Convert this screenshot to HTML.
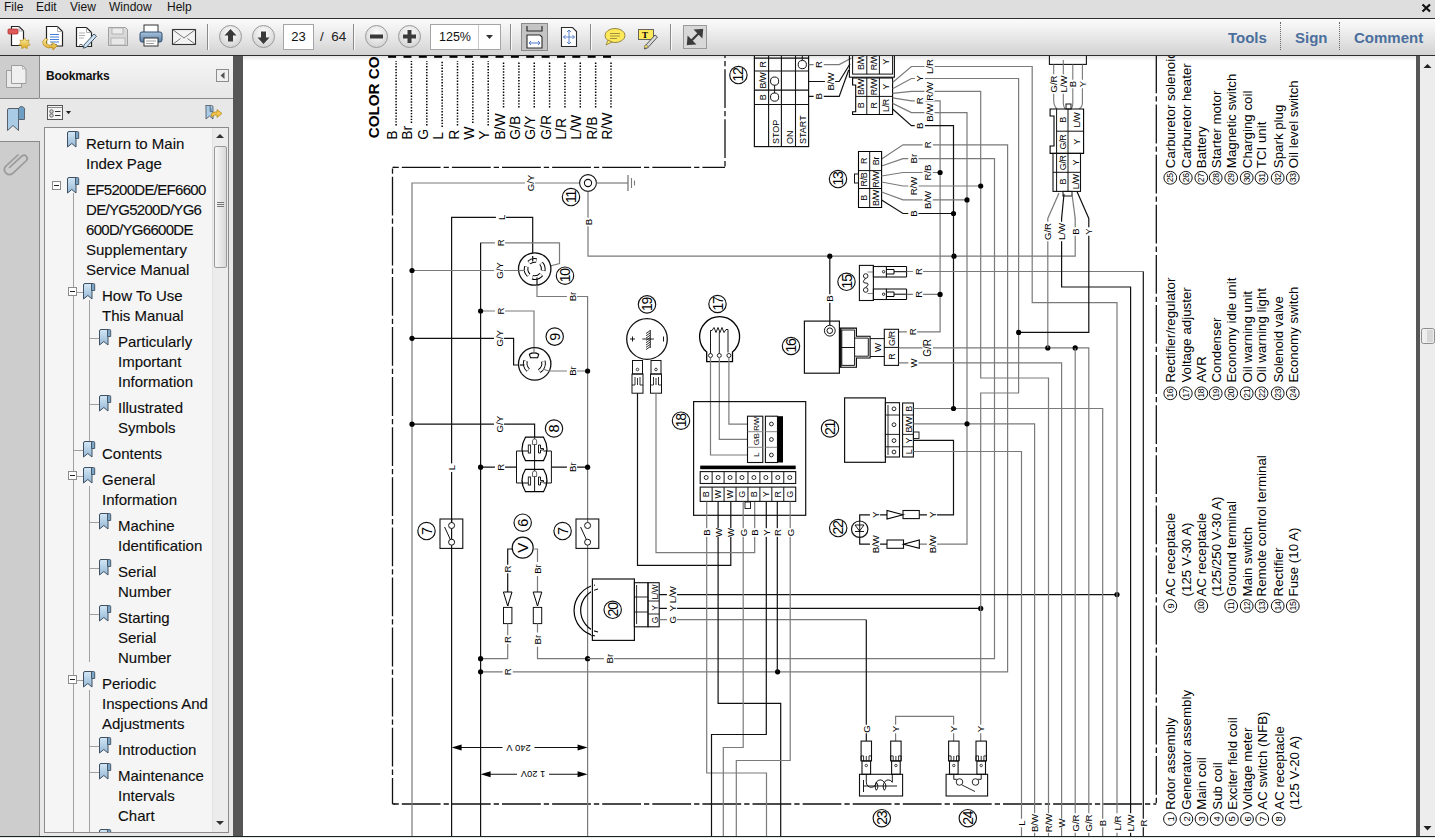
<!DOCTYPE html>
<html><head><meta charset="utf-8"><style>
*{margin:0;padding:0;box-sizing:border-box}
html,body{width:1435px;height:838px;overflow:hidden;background:#fff;font-family:"Liberation Sans",sans-serif}
.a{position:absolute}
#menu{left:0;top:0;width:1435px;height:18px;background:#dedede}
#menu span{position:absolute;top:0px;font-size:12px;color:#141414}
#mline{left:0;top:18px;width:1435px;height:1px;background:#2e2e2e}
#tb{left:0;top:19px;width:1435px;height:36px;background:linear-gradient(#fbfbfb,#eaeaea 45%,#d2d2d2)}
#tline{left:0;top:55px;width:1435px;height:1px;background:#2e2e2e}
.sep{position:absolute;top:24px;width:2px;height:26px;background:#8a8a8a;border-right:1px solid #fafafa}
.rb{position:absolute;top:29px;font-size:15px;font-weight:bold;color:#4b6f9c}
.dsep{position:absolute;top:22px;width:1px;height:28px;border-left:1px dotted #6a6a6a}
#lcol{left:0;top:56px;width:40px;height:780px;background:#cdcdcd;border-right:1px solid #8a8a8a}
#panel{left:40px;top:56px;width:193px;height:780px;background:#e8e8e8}
#divider{left:233px;top:56px;width:10px;height:780px;background:#565656}
#doc{left:243px;top:56px;width:1173px;height:780px;background:#fff}
#rdiv{left:1416px;top:56px;width:4px;height:780px;background:#565656}
#vscroll{left:1420px;top:56px;width:15px;height:780px;background:#ededed}
#bottom{left:0;top:836px;width:1435px;height:2px;background:#e2e8e7;border-top:1px solid #1e2422}
#tree{left:44px;top:127px;width:185px;height:706px;background:#f5f5f5;border:1px solid #8a8a8a;overflow:hidden}
.tx{position:absolute;font-size:15px;color:#0d0d0d;line-height:20px;white-space:nowrap;-webkit-text-stroke:0.12px #0d0d0d}
</style></head><body>
<div id="menu" class="a">
<span style="left:4px">File</span><span style="left:36px">Edit</span><span style="left:70px">View</span><span style="left:109px">Window</span><span style="left:167px">Help</span>
</div>
<svg class="a" style="left:1421px;top:3px" width="11" height="10"><path d="M1.5,1.5 L9,8.5 M9,1.5 L1.5,8.5" stroke="#111" stroke-width="2.2"/></svg>
<div id="mline" class="a"></div>
<div id="tb" class="a"></div>
<div id="tline" class="a"></div>
<div class="sep" style="left:207px"></div>
<div class="sep" style="left:353px"></div>
<div class="sep" style="left:510px"></div>
<div class="sep" style="left:590px"></div>
<div class="sep" style="left:670px"></div>
<div class="a" style="left:283px;top:24px;width:31px;height:26px;background:#fff;border:1px solid #a5a5a5;font-size:13px;text-align:center;line-height:24px;color:#111">23</div>
<div class="a" style="left:320px;top:29px;font-size:13.5px;color:#222">/&nbsp;&nbsp;64</div>
<div class="a" style="left:430px;top:24px;width:71px;height:26px;background:#fff;border:1px solid #a5a5a5;font-size:12.5px;line-height:24px;padding-left:8px;color:#111">125%</div>
<div class="a" style="left:478px;top:25px;width:1px;height:24px;background:#c8c8c8"></div>
<svg class="a" style="left:0;top:19px" width="720" height="36" viewBox="0 19 720 36">
<defs>
<linearGradient id="gold" x1="0" x2="0" y1="0" y2="1"><stop offset="0" stop-color="#fff2a0"/><stop offset="1" stop-color="#d9a520"/></linearGradient>
<radialGradient id="circ" cx="0.5" cy="0.35" r="0.7"><stop offset="0" stop-color="#ffffff"/><stop offset="1" stop-color="#cfcfcf"/></radialGradient>
<linearGradient id="pr" x1="0" x2="0" y1="0" y2="1"><stop offset="0" stop-color="#a9c3dc"/><stop offset="1" stop-color="#5a7ea3"/></linearGradient>
</defs>
<path d="M11.5,26.5 h7.5 l4.5,4.5 v14.5 h-12 z" fill="#fff" stroke="#222" stroke-width="1.2"/>
<path d="M19,26.5 v4.5 h4.5" fill="none" stroke="#999" stroke-width="0.8"/>
<rect x="8" y="29" width="10" height="5" rx="1" fill="#e05a5a" stroke="#a33" stroke-width="0.8"/>
<path d="M24.5,38 l1.6,2.6 3,-0.6 -1,2.9 2.2,2 -2.9,0.8 -0.2,3 -2.7,-1.5 -2.7,1.5 -0.2,-3 -2.9,-0.8 2.2,-2 -1,-2.9 3,0.6 z" fill="url(#gold)" stroke="#b88a1a" stroke-width="0.6"/>
<path d="M46.5,26.5 h11 l5,5 v14.5 h-16 z" fill="#fff" stroke="#222" stroke-width="1.2"/>
<path d="M57.5,26.5 v5 h5" fill="none" stroke="#999" stroke-width="0.8"/>
<path d="M50,34.5 h9 M50,37 h9 M50,39.5 h9 M50,42 h9 M51,44.5 h6" stroke="#2a6fd6" stroke-width="0.9"/>
<path d="M45.5,38.5 q-5,3 -1,7.5 q3,3 8,1.5 l0.5,2.5 l4.5,-4.5 l-5.5,-3 l0.3,2.3 q-3.5,1 -5.5,-1 q-1.8,-2 1.2,-4.5 z" fill="url(#gold)" stroke="#b0821a" stroke-width="0.7"/>
<path d="M76.5,27.5 h10 l5,5 v14 h-15 z" fill="#fff" stroke="#222" stroke-width="1.2"/>
<path d="M86.5,27.5 v5 h5" fill="none" stroke="#999" stroke-width="0.8"/>
<path d="M79,33 h6 M79,35.5 h6 M79,38 h5" stroke="#999" stroke-width="0.8"/>
<path d="M84,45 l10,-11 l2.5,2.2 l-10,11 l-3.2,1 z" fill="#cfe3f5" stroke="#34495e" stroke-width="0.9"/>
<path d="M79,45.5 q2,-2.5 4,0" fill="none" stroke="#333" stroke-width="0.8"/>
<path d="M108.5,27.5 h17 l2,2 v16 h-19 z" fill="#d9d9d9" stroke="#a0a0a0" stroke-width="1"/>
<rect x="112" y="28" width="11" height="6" fill="#ececec" stroke="#aaa" stroke-width="0.8"/>
<rect x="111" y="38" width="14" height="7" fill="#e8e8e8" stroke="#aaa" stroke-width="0.8"/>
<rect x="144" y="25" width="14" height="8" fill="#fff" stroke="#333" stroke-width="1"/>
<rect x="140" y="32" width="22" height="10" rx="2" fill="url(#pr)" stroke="#2f4f6f" stroke-width="1"/>
<rect x="144" y="38" width="14" height="8" fill="#fff" stroke="#333" stroke-width="1"/>
<path d="M146,41 h10 M146,43.5 h8" stroke="#777" stroke-width="0.7"/>
<rect x="172.5" y="29.5" width="23" height="15" fill="#f4f4f4" stroke="#333" stroke-width="1.1"/>
<path d="M172.5,29.5 l11.5,8.5 l11.5,-8.5 M172.5,44.5 l8,-6 M195.5,44.5 l-8,-6" fill="none" stroke="#666" stroke-width="0.9"/>
<circle cx="230.5" cy="36.5" r="11" fill="url(#circ)" stroke="#9a9a9a" stroke-width="1"/>
<path d="M230.5,29 l-6,6.5 h3.5 v6 h5 v-6 h3.5 z" fill="#3a3a3a"/>
<circle cx="263.5" cy="36.5" r="11" fill="url(#circ)" stroke="#9a9a9a" stroke-width="1"/>
<path d="M263.5,44 l-6,-6.5 h3.5 v-6 h5 v6 h3.5 z" fill="#3a3a3a"/>
<circle cx="376.5" cy="36.5" r="11" fill="url(#circ)" stroke="#9a9a9a" stroke-width="1"/>
<rect x="370" y="34.5" width="13" height="4" fill="#3a3a3a"/>
<circle cx="409.5" cy="36.5" r="11" fill="url(#circ)" stroke="#9a9a9a" stroke-width="1"/>
<path d="M407.5,30 h4 v4.5 h4.5 v4 h-4.5 v4.5 h-4 v-4.5 h-4.5 v-4 h4.5 z" fill="#3a3a3a"/>
<path d="M486,35 h7 l-3.5,4 z" fill="#333"/>
<rect x="521.5" y="23.5" width="26" height="27" fill="#c4c4c4" stroke="#8a8a8a" stroke-width="1"/>
<path d="M527,26 v5 h15 v-5" fill="none" stroke="#2a2a2a" stroke-width="1.2"/>
<path d="M527,48 v-13 h13 l2,2 v11 z" fill="#fff" stroke="#2a2a2a" stroke-width="1.1"/>
<path d="M529,43 h11 M529,43 l2,-2 M529,43 l2,2 M540,43 l-2,-2 M540,43 l-2,2" stroke="#4a78c8" stroke-width="1"/>
<path d="M561.5,27.5 h11 l4,4 v15 h-15 z" fill="#fff" stroke="#2a2a2a" stroke-width="1.1"/>
<path d="M569,30 v14 M563.5,37 h11 M569,30 l-2,2 M569,30 l2,2 M569,44 l-2,-2 M569,44 l2,-2 M563.5,37 l2,-2 M563.5,37 l2,2 M574.5,37 l-2,-2 M574.5,37 l-2,2" stroke="#4a78c8" stroke-width="0.9"/>
<ellipse cx="615" cy="35.5" rx="10" ry="7" fill="#fde95a" stroke="#8a7a3a" stroke-width="0.9"/>
<path d="M608,40 l-2,5 l6,-3 z" fill="#fde95a" stroke="#8a7a3a" stroke-width="0.8"/>
<path d="M610,33.5 h10 M610,36 h10 M610,38.5 h7" stroke="#8a7a3a" stroke-width="0.8"/>
<rect x="638.5" y="29.5" width="15" height="10" fill="#fde95a" stroke="#555" stroke-width="0.9"/>
<text x="642" y="38" font-size="9" font-weight="bold" font-family="Liberation Serif">T</text>
<path d="M645,46 l10,-11 l2.5,2 l-10,11 l-3,1 z" fill="#d8d8d8" stroke="#444" stroke-width="0.9"/>
<circle cx="646" cy="46.5" r="1.6" fill="#f3d95a" stroke="#776" stroke-width="0.6"/>
<rect x="683.5" y="25.5" width="23" height="23" fill="#d8d8d8" stroke="#9a9a9a" stroke-width="1"/>
<path d="M688,44 l14,-14 M702,30 l-6,0.5 l5.5,5.5 z M688,44 l6,-0.5 l-5.5,-5.5 z" stroke="#3a3a3a" stroke-width="2.2" fill="#3a3a3a"/>
</svg>
<div class="rb" style="left:1228px">Tools</div>
<div class="dsep" style="left:1280px"></div>
<div class="rb" style="left:1295px">Sign</div>
<div class="dsep" style="left:1339px"></div>
<div class="rb" style="left:1354px">Comment</div>

<div id="lcol" class="a"></div>

<svg class="a" style="left:0;top:56px" width="40" height="130" viewBox="0 56 40 130">
<rect x="0" y="98" width="40" height="43" fill="#e8e8e8"/>
<line x1="0" y1="98.5" x2="39.5" y2="98.5" stroke="#8a8a8a" stroke-width="1"/>
<line x1="0" y1="141.5" x2="39.5" y2="141.5" stroke="#8a8a8a" stroke-width="1"/>
<path d="M6.5,70.5 h15 v17 h-15 z" fill="#e9e9e9" stroke="#9d9d9d" stroke-width="1"/>
<path d="M11.5,65.5 h11 l3.5,3.5 v14.5 h-14.5 z" fill="#f0f0f0" stroke="#9d9d9d" stroke-width="1"/>
<path d="M22.5,65.5 v3.5 h3.5" fill="none" stroke="#aaa" stroke-width="0.8"/>
<path d="M7.5,110 a1.5,1.5 0 0 1 1.5,-1.5 h10 a3,3 0 0 1 3,3 v8 h-3.5 v11 l-5.5,-5 l-5.5,5 z" fill="#a9cbe6" stroke="#555f6a" stroke-width="1"/>
<path d="M18.5,108.5 a3,3 0 0 1 6,2.5 v8.5 h-6 z" fill="#6f9fc4" stroke="#555f6a" stroke-width="0.9"/>
<path d="M9,168 l13,-12 a3.2,3.2 0 0 1 4.5,4.5 l-14,13 a5,5 0 0 1 -7,-7 l13,-12" fill="none" stroke="#9a9a9a" stroke-width="1.7"/>
</svg>

<div id="panel" class="a"></div>

<div class="a" style="left:40px;top:56px;width:193px;height:42px;background:linear-gradient(#f6f6f6,#e6e6e6)"></div>
<div class="a" style="left:40px;top:98px;width:193px;height:1px;background:#8a8a8a"></div>
<div class="a" style="left:46px;top:69px;font-size:12px;font-weight:bold;color:#111;letter-spacing:-0.2px">Bookmarks</div>
<div class="a" style="left:216px;top:69px;width:13px;height:13px;border:1px solid #8c8c8c;background:#efefef"></div>
<svg class="a" style="left:216px;top:69px" width="13" height="13"><path d="M4.5,6.5 l4,-3.5 v7 z" fill="#555"/></svg>
<svg class="a" style="left:47px;top:105px" width="30" height="16">
<rect x="0.5" y="0.5" width="15" height="14" fill="#f4f4f4" stroke="#555" stroke-width="1"/>
<line x1="0.5" y1="2.5" x2="15.5" y2="2.5" stroke="#888" stroke-width="1"/>
<circle cx="4.5" cy="6.5" r="1.8" fill="#ccc" stroke="#555" stroke-width="0.8"/><circle cx="4.5" cy="10.5" r="1.8" fill="#ccc" stroke="#555" stroke-width="0.8"/>
<path d="M8,6.5 h5.5 M8,10.5 h5.5" stroke="#333" stroke-width="1"/>
<path d="M19,6 h5 l-2.5,3.2 z" fill="#222"/>
</svg>
<svg class="a" style="left:204px;top:104px" width="20" height="18">
<path d="M1.5,1.5 h6 a1.5,1.5 0 0 1 1.5,1.5 v12 l-3.5,-3 l-3.5,3 v-12 a1.5,1.5 0 0 1 0,-1.5" fill="#a9cbe6" stroke="#555f6a" stroke-width="0.9"/>
<path d="M6,1.5 v6 h3" fill="#6f9fc4" stroke="#555f6a" stroke-width="0.7"/>
<path d="M7,12 a4,4 0 0 1 4,-4 h2 v-2.5 l5,4 l-5,4 v-2.5 h-2 a2,2 0 0 0 -2,2 z" fill="#f3c44a" stroke="#b0821a" stroke-width="0.7"/>
</svg>

<div id="divider" class="a"></div>
<div id="doc" class="a"></div>
<svg class="a" style="left:243px;top:56px" width="1173" height="780" viewBox="243 56 1173 780" font-family="Liberation Sans, sans-serif"><polyline points="392.5,168.4 392.5,804" fill="none" stroke="#111" stroke-width="1.3" stroke-dasharray="5.3 3 38.8 3"/>
<polyline points="393.5,167.4 725,167.4" fill="none" stroke="#111" stroke-width="1.3" stroke-dasharray="5.3 3 38.8 3"/>
<polyline points="725,166.4 725,50" fill="none" stroke="#111" stroke-width="1.3" stroke-dasharray="5.3 3 38.8 3"/>
<polyline points="393.5,804 1156.3,804" fill="none" stroke="#111" stroke-width="1.3" stroke-dasharray="5.3 3 38.8 3"/>
<polyline points="1156.3,803 1156.3,50" fill="none" stroke="#111" stroke-width="1.3" stroke-dasharray="5.3 3 38.8 3"/>
<polyline points="392.5,167.4 395,167.4" fill="none" stroke="#111" stroke-width="1.3" />
<polyline points="392.5,804 395,804" fill="none" stroke="#111" stroke-width="1.3" />
<text transform="translate(378.8,138.3) rotate(-90)" font-size="15.2" font-weight="bold">COLOR CODE</text>
<text transform="translate(397.1,139.8) rotate(-90)" font-size="14">B</text>
<line x1="396.1" y1="125.5" x2="396.1" y2="61" stroke="#000" stroke-width="1.5" stroke-dasharray="1.4 1.5"/>
<rect x="388.1" y="56" width="8" height="1.8" fill="#000"/>
<text transform="translate(412.45000000000005,139.8) rotate(-90)" font-size="14">Br</text>
<line x1="411.45000000000005" y1="123" x2="411.45000000000005" y2="61" stroke="#000" stroke-width="1.5" stroke-dasharray="1.4 1.5"/>
<rect x="403.45000000000005" y="56" width="8" height="1.8" fill="#000"/>
<text transform="translate(427.8,139.8) rotate(-90)" font-size="14">G</text>
<line x1="426.8" y1="125.5" x2="426.8" y2="61" stroke="#000" stroke-width="1.5" stroke-dasharray="1.4 1.5"/>
<rect x="418.8" y="56" width="8" height="1.8" fill="#000"/>
<text transform="translate(443.15000000000003,139.8) rotate(-90)" font-size="14">L</text>
<line x1="442.15000000000003" y1="127" x2="442.15000000000003" y2="61" stroke="#000" stroke-width="1.5" stroke-dasharray="1.4 1.5"/>
<rect x="434.15000000000003" y="56" width="8" height="1.8" fill="#000"/>
<text transform="translate(458.5,139.8) rotate(-90)" font-size="14">R</text>
<line x1="457.5" y1="125.5" x2="457.5" y2="61" stroke="#000" stroke-width="1.5" stroke-dasharray="1.4 1.5"/>
<rect x="449.5" y="56" width="8" height="1.8" fill="#000"/>
<text transform="translate(473.85,139.8) rotate(-90)" font-size="14">W</text>
<line x1="472.85" y1="123" x2="472.85" y2="61" stroke="#000" stroke-width="1.5" stroke-dasharray="1.4 1.5"/>
<rect x="464.85" y="56" width="8" height="1.8" fill="#000"/>
<text transform="translate(489.20000000000005,139.8) rotate(-90)" font-size="14">Y</text>
<line x1="488.20000000000005" y1="125.5" x2="488.20000000000005" y2="61" stroke="#000" stroke-width="1.5" stroke-dasharray="1.4 1.5"/>
<rect x="480.20000000000005" y="56" width="8" height="1.8" fill="#000"/>
<text transform="translate(504.55,139.8) rotate(-90)" font-size="14">B/W</text>
<line x1="503.55" y1="107.5" x2="503.55" y2="61" stroke="#000" stroke-width="1.5" stroke-dasharray="1.4 1.5"/>
<rect x="495.55" y="56" width="8" height="1.8" fill="#000"/>
<text transform="translate(519.9,139.8) rotate(-90)" font-size="14">G/B</text>
<line x1="518.9" y1="107.5" x2="518.9" y2="61" stroke="#000" stroke-width="1.5" stroke-dasharray="1.4 1.5"/>
<rect x="510.9" y="56" width="8" height="1.8" fill="#000"/>
<text transform="translate(535.25,139.8) rotate(-90)" font-size="14">G/Y</text>
<line x1="534.25" y1="107.5" x2="534.25" y2="61" stroke="#000" stroke-width="1.5" stroke-dasharray="1.4 1.5"/>
<rect x="526.25" y="56" width="8" height="1.8" fill="#000"/>
<text transform="translate(550.6,139.8) rotate(-90)" font-size="14">G/R</text>
<line x1="549.6" y1="107.5" x2="549.6" y2="61" stroke="#000" stroke-width="1.5" stroke-dasharray="1.4 1.5"/>
<rect x="541.6" y="56" width="8" height="1.8" fill="#000"/>
<text transform="translate(565.95,139.8) rotate(-90)" font-size="14">L/R</text>
<line x1="564.95" y1="107.5" x2="564.95" y2="61" stroke="#000" stroke-width="1.5" stroke-dasharray="1.4 1.5"/>
<rect x="556.95" y="56" width="8" height="1.8" fill="#000"/>
<text transform="translate(581.3,139.8) rotate(-90)" font-size="14">L/W</text>
<line x1="580.3" y1="107.5" x2="580.3" y2="61" stroke="#000" stroke-width="1.5" stroke-dasharray="1.4 1.5"/>
<rect x="572.3" y="56" width="8" height="1.8" fill="#000"/>
<text transform="translate(596.65,139.8) rotate(-90)" font-size="14">R/B</text>
<line x1="595.65" y1="107.5" x2="595.65" y2="61" stroke="#000" stroke-width="1.5" stroke-dasharray="1.4 1.5"/>
<rect x="587.65" y="56" width="8" height="1.8" fill="#000"/>
<text transform="translate(612.0,139.8) rotate(-90)" font-size="14">R/W</text>
<line x1="611.0" y1="107.5" x2="611.0" y2="61" stroke="#000" stroke-width="1.5" stroke-dasharray="1.4 1.5"/>
<rect x="603.0" y="56" width="8" height="1.8" fill="#000"/>
<polyline points="412,836 412,183 579.5,183" fill="none" stroke="#7a7a7a" stroke-width="1.2" />
<rect x="524.92" y="173.148" width="10.16" height="19.703999999999997" fill="#fff"/>
<text transform="translate(530,183) rotate(-90)" text-anchor="middle" dominant-baseline="central" font-size="9.6" fill="#000" font-weight="normal">G/Y</text>
<circle cx="588" cy="183" r="8.4" fill="#fff" stroke="#111" stroke-width="1.1"/>
<circle cx="588" cy="183" r="3.6" fill="#fff" stroke="#111" stroke-width="1.1"/>
<polyline points="596.4,183 628,183" fill="none" stroke="#7a7a7a" stroke-width="1.2" />
<line x1="628" y1="175" x2="628" y2="191" stroke="#7a7a7a" stroke-width="1.3"/>
<line x1="631.5" y1="178" x2="631.5" y2="188" stroke="#7a7a7a" stroke-width="1.1"/>
<line x1="634.5" y1="180.5" x2="634.5" y2="185.5" stroke="#7a7a7a" stroke-width="1.1"/>
<circle cx="571" cy="197" r="8.7" fill="#fff" stroke="#111" stroke-width="1.15"/>
<text transform="translate(571,197) rotate(-90)" text-anchor="middle" dominant-baseline="central" font-size="14" letter-spacing="-1.2">11</text>
<polyline points="588,191.4 588,256.2 1075.2,256.2 1075.2,218" fill="none" stroke="#7a7a7a" stroke-width="1.2" />
<rect x="582.92" y="217.716" width="10.16" height="8.568" fill="#fff"/>
<text transform="translate(588,222) rotate(-90)" text-anchor="middle" dominant-baseline="central" font-size="9.6" fill="#000" font-weight="normal">B</text>
<circle cx="829.8" cy="256.2" r="2.6" fill="#000"/>
<circle cx="954" cy="256.2" r="2.6" fill="#000"/>
<polyline points="451.6,836 451.6,217.3 532.7,217.3 532.7,256" fill="none" stroke="#111" stroke-width="1.2" />
<rect x="495.92" y="213.01600000000002" width="10.16" height="8.568" fill="#fff"/>
<text transform="translate(501,217.3) rotate(-90)" text-anchor="middle" dominant-baseline="central" font-size="9.6" fill="#000" font-weight="normal">L</text>
<rect x="446.52000000000004" y="463.416" width="10.16" height="8.568" fill="#fff"/>
<text transform="translate(451.6,467.7) rotate(-90)" text-anchor="middle" dominant-baseline="central" font-size="9.6" fill="#000" font-weight="normal">L</text>
<polyline points="480.6,242.8 559.5,242.8 559.5,263.5 542.5,268" fill="none" stroke="#7a7a7a" stroke-width="1.2" />
<polyline points="480.6,836 480.6,242.8" fill="none" stroke="#111" stroke-width="1.2" />
<rect x="494.92" y="238.51600000000002" width="10.16" height="8.568" fill="#fff"/>
<text transform="translate(500,242.8) rotate(-90)" text-anchor="middle" dominant-baseline="central" font-size="9.6" fill="#000" font-weight="normal">R</text>
<circle cx="534.7" cy="269" r="16.2" fill="#fff" stroke="#111" stroke-width="1.3"/>
<path d="M528.95,262.61 A8.6,8.6 0 0 1 536.49,260.59" fill="none" stroke="#000" stroke-width="4.6"/>
<path d="M529.09,262.48 A8.6,8.6 0 0 1 536.30,260.55" fill="none" stroke="#fff" stroke-width="2.6"/>
<path d="M541.09,263.25 A8.6,8.6 0 0 1 543.11,270.79" fill="none" stroke="#000" stroke-width="4.6"/>
<path d="M541.22,263.39 A8.6,8.6 0 0 1 543.15,270.60" fill="none" stroke="#fff" stroke-width="2.6"/>
<path d="M541.29,274.53 A8.6,8.6 0 0 1 532.33,277.27" fill="none" stroke="#000" stroke-width="4.6"/>
<path d="M541.17,274.67 A8.6,8.6 0 0 1 532.51,277.32" fill="none" stroke="#fff" stroke-width="2.6"/>
<path d="M528.73,275.19 A8.6,8.6 0 0 1 526.43,266.63" fill="none" stroke="#000" stroke-width="4.6"/>
<path d="M528.59,275.05 A8.6,8.6 0 0 1 526.38,266.81" fill="none" stroke="#fff" stroke-width="2.6"/>
<line x1="532.7" y1="256" x2="532.7" y2="261.5" stroke="#111" stroke-width="1.2"/>
<line x1="518.5" y1="270.5" x2="525" y2="270.5" stroke="#7a7a7a" stroke-width="1.2"/>
<line x1="537" y1="285" x2="537" y2="277.5" stroke="#111" stroke-width="1.2"/>
<circle cx="565" cy="275.7" r="8.7" fill="#fff" stroke="#111" stroke-width="1.15"/>
<text transform="translate(565,275.7) rotate(-90)" text-anchor="middle" dominant-baseline="central" font-size="14" letter-spacing="-1.2">10</text>
<polyline points="412,270.5 518.5,270.5" fill="none" stroke="#7a7a7a" stroke-width="1.2" />
<circle cx="412" cy="270.5" r="2.6" fill="#000"/>
<rect x="493.92" y="260.648" width="10.16" height="19.703999999999997" fill="#fff"/>
<text transform="translate(499,270.5) rotate(-90)" text-anchor="middle" dominant-baseline="central" font-size="9.6" fill="#000" font-weight="normal">G/Y</text>
<polyline points="537,285 537,296.5 587.6,296.5 587.6,522.5" fill="none" stroke="#7a7a7a" stroke-width="1.2" />
<polyline points="587.6,545 587.6,836" fill="none" stroke="#7a7a7a" stroke-width="1.2" />
<rect x="566.92" y="289.432" width="10.16" height="14.136" fill="#fff"/>
<text transform="translate(572,296.5) rotate(-90)" text-anchor="middle" dominant-baseline="central" font-size="9.6" fill="#000" font-weight="normal">Br</text>
<polyline points="480.6,311 534,311 534,348" fill="none" stroke="#7a7a7a" stroke-width="1.2" />
<circle cx="480.6" cy="311" r="2.6" fill="#000"/>
<rect x="494.92" y="306.716" width="10.16" height="8.568" fill="#fff"/>
<text transform="translate(500,311) rotate(-90)" text-anchor="middle" dominant-baseline="central" font-size="9.6" fill="#000" font-weight="normal">R</text>
<polyline points="412,338.3 513.6,338.3 513.6,365 520,365" fill="none" stroke="#111" stroke-width="1.2" />
<circle cx="412" cy="338.3" r="2.6" fill="#000"/>
<rect x="493.92" y="328.44800000000004" width="10.16" height="19.703999999999997" fill="#fff"/>
<text transform="translate(499,338.3) rotate(-90)" text-anchor="middle" dominant-baseline="central" font-size="9.6" fill="#000" font-weight="normal">G/Y</text>
<circle cx="534.7" cy="363.9" r="16.2" fill="#fff" stroke="#111" stroke-width="1.3"/>
<path d="M529.4,354.3 Q534,351.5 538.7,354.3 L537.6,357.8 H530.5 Z" fill="#fff" stroke="#000" stroke-width="1.1"/>
<path d="M528.24,370.14 A9.2,9.2 0 0 1 525.56,360.76" fill="none" stroke="#000" stroke-width="4.6"/>
<path d="M528.10,370.00 A9.2,9.2 0 0 1 525.50,360.96" fill="none" stroke="#fff" stroke-width="2.6"/>
<path d="M543.33,361.07 A9.2,9.2 0 0 1 539.28,371.10" fill="none" stroke="#000" stroke-width="4.6"/>
<path d="M543.37,361.27 A9.2,9.2 0 0 1 539.44,370.99" fill="none" stroke="#fff" stroke-width="2.6"/>
<line x1="534" y1="348" x2="534" y2="353" stroke="#7a7a7a" stroke-width="1.2"/>
<line x1="520" y1="365" x2="524.5" y2="365" stroke="#111" stroke-width="1.2"/>
<polyline points="543,369 548.5,371 549,371" fill="none" stroke="#7a7a7a" stroke-width="1.1" />
<circle cx="554.7" cy="336.6" r="8.7" fill="#fff" stroke="#111" stroke-width="1.15"/>
<text transform="translate(554.7,336.6) rotate(-90)" text-anchor="middle" dominant-baseline="central" font-size="14.5" letter-spacing="0">9</text>
<polyline points="548.5,371 587.6,371" fill="none" stroke="#7a7a7a" stroke-width="1.2" />
<circle cx="587.6" cy="371" r="2.6" fill="#000"/>
<rect x="566.92" y="363.932" width="10.16" height="14.136" fill="#fff"/>
<text transform="translate(572,371) rotate(-90)" text-anchor="middle" dominant-baseline="central" font-size="9.6" fill="#000" font-weight="normal">Br</text>
<polyline points="412,424.2 534.6,424.2 534.6,438" fill="none" stroke="#111" stroke-width="1.2" />
<circle cx="412" cy="424.2" r="2.6" fill="#000"/>
<rect x="493.92" y="414.348" width="10.16" height="19.703999999999997" fill="#fff"/>
<text transform="translate(499,424.2) rotate(-90)" text-anchor="middle" dominant-baseline="central" font-size="9.6" fill="#000" font-weight="normal">G/Y</text>
<path d="M525.5,437.2 H543.5 Q550.5,449 543.5,460.6 H525.5 Q518.5,449 525.5,437.2 Z" fill="#fff" stroke="#000" stroke-width="1.2"/>
<path d="M525.5,469.3 H543.5 Q550.5,480.5 543.5,491.7 H525.5 Q518.5,480.5 525.5,469.3 Z" fill="#fff" stroke="#000" stroke-width="1.2"/>
<line x1="534.6" y1="438" x2="534.6" y2="492" stroke="#111" stroke-width="1.0"/>
<line x1="516.5" y1="451" x2="516.5" y2="483" stroke="#111" stroke-width="1.0"/>
<line x1="551.4" y1="451" x2="551.4" y2="483" stroke="#111" stroke-width="1.0"/>
<rect x="528.3" y="445.0" width="2.300000000000068" height="8.0" fill="#fff" stroke="#111" stroke-width="0.9" rx="0"/>
<path d="M538.5,445.0 h2 v3.5 h3 v1.5 h-3 v3 h-2 z" stroke="#000" stroke-width="0.9" fill="#fff"/>
<path d="M532.5,444.5 v-3.5 a2.1,2.1 0 0 1 4.2,0 v3.5 z" fill="#fff" stroke="#555" stroke-width="0.9"/>
<line x1="516.5" y1="451.0" x2="528.3" y2="451.0" stroke="#111" stroke-width="1.0"/>
<line x1="543.5" y1="451.0" x2="551.4" y2="451.0" stroke="#111" stroke-width="1.0"/>
<rect x="528.3" y="477.0" width="2.300000000000068" height="8.0" fill="#fff" stroke="#111" stroke-width="0.9" rx="0"/>
<path d="M538.5,477.0 h2 v3.5 h3 v1.5 h-3 v3 h-2 z" stroke="#000" stroke-width="0.9" fill="#fff"/>
<path d="M532.5,476.5 v-3.5 a2.1,2.1 0 0 1 4.2,0 v3.5 z" fill="#fff" stroke="#555" stroke-width="0.9"/>
<line x1="516.5" y1="483.0" x2="528.3" y2="483.0" stroke="#111" stroke-width="1.0"/>
<line x1="543.5" y1="483.0" x2="551.4" y2="483.0" stroke="#111" stroke-width="1.0"/>
<circle cx="554" cy="428.5" r="8.7" fill="#fff" stroke="#111" stroke-width="1.15"/>
<text transform="translate(554,428.5) rotate(-90)" text-anchor="middle" dominant-baseline="central" font-size="14.5" letter-spacing="0">8</text>
<polyline points="480.6,467.2 516.5,467.2" fill="none" stroke="#111" stroke-width="1.2" />
<circle cx="480.6" cy="467.2" r="2.6" fill="#000"/>
<rect x="494.92" y="462.916" width="10.16" height="8.568" fill="#fff"/>
<text transform="translate(500,467.2) rotate(-90)" text-anchor="middle" dominant-baseline="central" font-size="9.6" fill="#000" font-weight="normal">R</text>
<polyline points="551.4,467.2 587.6,467.2" fill="none" stroke="#111" stroke-width="1.2" />
<circle cx="587.6" cy="467.2" r="2.6" fill="#000"/>
<rect x="566.92" y="460.132" width="10.16" height="14.136" fill="#fff"/>
<text transform="translate(572,467.2) rotate(-90)" text-anchor="middle" dominant-baseline="central" font-size="9.6" fill="#000" font-weight="normal">Br</text>
<rect x="440.0" y="519" width="22.80000000000001" height="29.399999999999977" fill="none" stroke="#111" stroke-width="1.1" rx="0"/>
<circle cx="451.6" cy="525.5" r="3.0" fill="#fff" stroke="#111" stroke-width="1.0"/>
<circle cx="451.6" cy="542.2" r="3.0" fill="#fff" stroke="#111" stroke-width="1.0"/>
<line x1="444.6" y1="527" x2="450.6" y2="540" stroke="#111" stroke-width="1.0"/>
<rect x="576.0" y="519" width="22.800000000000068" height="29.399999999999977" fill="none" stroke="#111" stroke-width="1.1" rx="0"/>
<circle cx="587.6" cy="525.5" r="3.0" fill="#fff" stroke="#111" stroke-width="1.0"/>
<circle cx="587.6" cy="542.2" r="3.0" fill="#fff" stroke="#111" stroke-width="1.0"/>
<line x1="580.6" y1="527" x2="586.6" y2="540" stroke="#111" stroke-width="1.0"/>
<polyline points="451.6,522.5 451.6,519" fill="none" stroke="#111" stroke-width="1.2" />
<circle cx="426.5" cy="531" r="8.7" fill="#fff" stroke="#111" stroke-width="1.15"/>
<text transform="translate(426.5,531) rotate(-90)" text-anchor="middle" dominant-baseline="central" font-size="14.5" letter-spacing="0">7</text>
<circle cx="562.6" cy="531" r="8.7" fill="#fff" stroke="#111" stroke-width="1.15"/>
<text transform="translate(562.6,531) rotate(-90)" text-anchor="middle" dominant-baseline="central" font-size="14.5" letter-spacing="0">7</text>
<circle cx="522.7" cy="547.7" r="10.5" fill="#fff" stroke="#111" stroke-width="1.2"/>
<text transform="translate(522.7,547.7) rotate(-90)" text-anchor="middle" dominant-baseline="central" font-size="15">V</text>
<circle cx="522.7" cy="522.7" r="8.7" fill="#fff" stroke="#111" stroke-width="1.15"/>
<text transform="translate(522.7,522.7) rotate(-90)" text-anchor="middle" dominant-baseline="central" font-size="14.5" letter-spacing="0">6</text>
<polyline points="512.2,549 507.7,549 507.7,606" fill="none" stroke="#111" stroke-width="1.2" />
<path d="M503.4,592 h8.6 l-4.3,14 z" fill="#fff" stroke="#000" stroke-width="1.0"/>
<rect x="503.5" y="607.4" width="8.399999999999977" height="16.200000000000045" fill="none" stroke="#111" stroke-width="1.0" rx="0"/>
<polyline points="507.7,623.6 507.7,658.7 480.6,658.7" fill="none" stroke="#7a7a7a" stroke-width="1.2" />
<rect x="502.62" y="564.716" width="10.16" height="8.568" fill="#fff"/>
<text transform="translate(507.7,569) rotate(-90)" text-anchor="middle" dominant-baseline="central" font-size="9.6" fill="#000" font-weight="normal">R</text>
<rect x="502.62" y="635.316" width="10.16" height="8.568" fill="#fff"/>
<text transform="translate(507.7,639.6) rotate(-90)" text-anchor="middle" dominant-baseline="central" font-size="9.6" fill="#000" font-weight="normal">R</text>
<polyline points="533.2,549 537.5,549 537.5,606" fill="none" stroke="#7a7a7a" stroke-width="1.2" />
<path d="M533.2,592 h8.6 l-4.3,14 z" fill="#fff" stroke="#000" stroke-width="1.0"/>
<rect x="533.3" y="607.4" width="8.400000000000091" height="16.200000000000045" fill="none" stroke="#111" stroke-width="1.0" rx="0"/>
<polyline points="537.5,623.6 537.5,658.7 587.6,658.7" fill="none" stroke="#7a7a7a" stroke-width="1.2" />
<rect x="532.42" y="561.932" width="10.16" height="14.136" fill="#fff"/>
<text transform="translate(537.5,569) rotate(-90)" text-anchor="middle" dominant-baseline="central" font-size="9.6" fill="#000" font-weight="normal">Br</text>
<rect x="532.42" y="632.532" width="10.16" height="14.136" fill="#fff"/>
<text transform="translate(537.5,639.6) rotate(-90)" text-anchor="middle" dominant-baseline="central" font-size="9.6" fill="#000" font-weight="normal">Br</text>
<circle cx="480.6" cy="658.7" r="2.6" fill="#000"/>
<circle cx="587.6" cy="658.7" r="2.6" fill="#000"/>
<polyline points="587.6,658.7 994.5,658.7 994.5,158.6 903,158.6 881.6,166" fill="none" stroke="#7a7a7a" stroke-width="1.2" />
<rect x="603.92" y="651.6320000000001" width="10.16" height="14.136" fill="#fff"/>
<text transform="translate(609,658.7) rotate(-90)" text-anchor="middle" dominant-baseline="central" font-size="9.6" fill="#000" font-weight="normal">Br</text>
<polyline points="480.6,671.8 1007.6,671.8 1007.6,144.8 903,144.8 881.6,159" fill="none" stroke="#7a7a7a" stroke-width="1.2" />
<circle cx="480.6" cy="671.8" r="2.6" fill="#000"/>
<rect x="502.62" y="667.516" width="10.16" height="8.568" fill="#fff"/>
<text transform="translate(507.7,671.8) rotate(-90)" text-anchor="middle" dominant-baseline="central" font-size="9.6" fill="#000" font-weight="normal">R</text>
<circle cx="777.6" cy="671.8" r="2.6" fill="#000"/>
<line x1="457.6" y1="747.5" x2="581.6" y2="747.5" stroke="#111" stroke-width="1.1"/>
<path d="M451.6,747.5 l10,-3 v6 z M587.6,747.5 l-10,-3 v6 z" fill="#000"/>
<rect x="502.5" y="742.5" width="32" height="10" fill="#fff"/>
<text transform="translate(518.5,747.5) rotate(180)" text-anchor="middle" dominant-baseline="central" font-size="9.3">240 V</text>
<line x1="486.6" y1="774.2" x2="581.6" y2="774.2" stroke="#111" stroke-width="1.1"/>
<path d="M480.6,774.2 l10,-3 v6 z M587.6,774.2 l-10,-3 v6 z" fill="#000"/>
<rect x="517" y="769.2" width="32" height="10" fill="#fff"/>
<text transform="translate(533,774.2) rotate(180)" text-anchor="middle" dominant-baseline="central" font-size="9.3">1 20V</text>
<rect x="592.4" y="579" width="42.0" height="61.39999999999998" fill="none" stroke="#111" stroke-width="1.2" rx="0"/>
<path d="M598,589 A22,22 0 0 0 598,632" fill="none" stroke="#000" stroke-width="1.2"/>
<path d="M595,585 A26,26 0 0 0 595,636" fill="none" stroke="#000" stroke-width="1.2"/>
<rect x="591" y="583" width="3" height="52" fill="#fff"/>
<line x1="592.4" y1="583" x2="592.4" y2="637" stroke="#111" stroke-width="1.2"/>
<circle cx="612.7" cy="609.8" r="8.7" fill="#fff" stroke="#111" stroke-width="1.15"/>
<text transform="translate(612.7,609.8) rotate(-90)" text-anchor="middle" dominant-baseline="central" font-size="14" letter-spacing="-1.2">20</text>
<rect x="634.4" y="582.7" width="13.600000000000023" height="44.09999999999991" fill="none" stroke="#111" stroke-width="1.1" rx="0"/>
<line x1="636.6" y1="585" x2="636.6" y2="624" stroke="#111" stroke-width="0.9"/>
<line x1="634.4" y1="597" x2="648" y2="597" stroke="#111" stroke-width="0.9"/>
<line x1="634.4" y1="612" x2="648" y2="612" stroke="#111" stroke-width="0.9"/>
<rect x="648" y="582.7" width="11.200000000000045" height="44.09999999999991" fill="none" stroke="#111" stroke-width="1.1" rx="0"/>
<line x1="648" y1="601" x2="659.2" y2="601" stroke="#111" stroke-width="0.9"/>
<line x1="648" y1="614" x2="659.2" y2="614" stroke="#111" stroke-width="0.9"/>
<text transform="translate(657.5,592) rotate(-90)" text-anchor="middle" font-size="8.5">L/W</text>
<text transform="translate(657.5,608) rotate(-90)" text-anchor="middle" font-size="8.5">Y</text>
<text transform="translate(657.5,620) rotate(-90)" text-anchor="middle" font-size="8.5">G</text>
<polyline points="659.2,594.6 1117,594.6" fill="none" stroke="#111" stroke-width="1.2" />
<circle cx="1117" cy="594.6" r="2.6" fill="#000"/>
<rect x="666.92" y="584.748" width="10.16" height="19.703999999999997" fill="#fff"/>
<text transform="translate(672,594.6) rotate(-90)" text-anchor="middle" dominant-baseline="central" font-size="9.6" fill="#000" font-weight="normal">L/W</text>
<polyline points="659.2,608.4 980.7,608.4" fill="none" stroke="#111" stroke-width="1.2" />
<circle cx="980.7" cy="608.4" r="2.6" fill="#000"/>
<rect x="666.92" y="604.116" width="10.16" height="8.568" fill="#fff"/>
<text transform="translate(672,608.4) rotate(-90)" text-anchor="middle" dominant-baseline="central" font-size="9.6" fill="#000" font-weight="normal">Y</text>
<polyline points="659.2,619.7 866.3,619.7" fill="none" stroke="#7a7a7a" stroke-width="1.2" />
<polyline points="866.3,619.7 866.3,741" fill="none" stroke="#111" stroke-width="1.2" />
<rect x="666.92" y="615.416" width="10.16" height="8.568" fill="#fff"/>
<text transform="translate(672,619.7) rotate(-90)" text-anchor="middle" dominant-baseline="central" font-size="9.6" fill="#000" font-weight="normal">G</text>
<rect x="861.2199999999999" y="724.716" width="10.16" height="8.568" fill="#fff"/>
<text transform="translate(866.3,729) rotate(-90)" text-anchor="middle" dominant-baseline="central" font-size="9.6" fill="#000" font-weight="normal">G</text>
<circle cx="647" cy="339" r="20.3" fill="#fff" stroke="#111" stroke-width="1.3"/>
<path d="M630,339 h5 M632.5,336.5 v5 M663.5,336.5 v5" stroke="#000" stroke-width="0.9" fill="none"/>
<line x1="642.3" y1="339" x2="653.9" y2="339" stroke="#111" stroke-width="0.9"/>
<path d="M650.3,330 v18 M646,333.5 L650.3,330.5 M646,335.8 L650.3,332.8 M646,338.1 L650.3,335.1 M646,340.4 L650.3,337.4 M646,342.7 L650.3,339.7 M646,345.0 L650.3,342.0 M646,347.3 L650.3,344.3 M646,349.6 L650.3,346.6" stroke="#000" stroke-width="0.8" fill="none"/>
<circle cx="647" cy="304.4" r="8.7" fill="#fff" stroke="#111" stroke-width="1.15"/>
<text transform="translate(647,304.4) rotate(-90)" text-anchor="middle" dominant-baseline="central" font-size="14" letter-spacing="-1.2">19</text>
<rect x="632.5" y="360.5" width="10.0" height="13.5" fill="none" stroke="#111" stroke-width="1.0" rx="0"/>
<circle cx="637.5" cy="369.5" r="1.3" fill="#fff" stroke="#111" stroke-width="0.8"/>
<rect x="632.0" y="374" width="11.0" height="19.19999999999999" fill="none" stroke="#111" stroke-width="1.0" rx="0"/>
<path d="M632.0,385 h3 v-8 M643.0,385 h-3 v-8 M637.5,378 v7" stroke="#000" stroke-width="0.8" fill="none"/>
<rect x="651" y="360.5" width="10" height="13.5" fill="none" stroke="#111" stroke-width="1.0" rx="0"/>
<circle cx="656" cy="369.5" r="1.3" fill="#fff" stroke="#111" stroke-width="0.8"/>
<rect x="650.5" y="374" width="11.0" height="19.19999999999999" fill="none" stroke="#111" stroke-width="1.0" rx="0"/>
<path d="M650.5,385 h3 v-8 M661.5,385 h-3 v-8 M656,378 v7" stroke="#000" stroke-width="0.8" fill="none"/>
<polyline points="637.5,393.2 637.5,565.4 730.8,565.4 730.8,501.4" fill="none" stroke="#111" stroke-width="1.2" />
<polyline points="656,393.2 656,552.7 754.7,552.7 754.7,501.4" fill="none" stroke="#7a7a7a" stroke-width="1.2" />
<path d="M706.7,352 A20,20 0 1 1 732.5,352 L732.5,361.7 L706.7,361.7 Z" fill="#fff" stroke="#000" stroke-width="1.3"/>
<circle cx="710.5" cy="355.5" r="2.0" fill="#fff" stroke="#111" stroke-width="0.9"/>
<circle cx="719.3" cy="355.5" r="2.0" fill="#fff" stroke="#111" stroke-width="0.9"/>
<circle cx="728.9" cy="355.5" r="2.0" fill="#fff" stroke="#111" stroke-width="0.9"/>
<path d="M710.5,353.5 v-23 h1.5 l2,-3 l2,5 l2,-5 l2,5 l2,-5 l2,5 l2,-3 h2 v23" fill="none" stroke="#000" stroke-width="0.9"/>
<line x1="719.3" y1="353.5" x2="719.3" y2="332" stroke="#111" stroke-width="0.9"/>
<circle cx="717.5" cy="304" r="8.7" fill="#fff" stroke="#111" stroke-width="1.15"/>
<text transform="translate(717.5,304) rotate(-90)" text-anchor="middle" dominant-baseline="central" font-size="14" letter-spacing="-1.2">17</text>
<polyline points="710.5,357.5 710.5,455 747.5,455" fill="none" stroke="#7a7a7a" stroke-width="1.2" />
<polyline points="719.3,357.5 719.3,439.4 747.5,439.4" fill="none" stroke="#7a7a7a" stroke-width="1.2" />
<polyline points="728.9,357.5 728.9,424.2 747.5,424.2" fill="none" stroke="#7a7a7a" stroke-width="1.2" />
<rect x="693.6" y="401.6" width="112.10000000000002" height="113.69999999999993" fill="none" stroke="#111" stroke-width="1.2" rx="0"/>
<circle cx="681" cy="420.7" r="8.7" fill="#fff" stroke="#111" stroke-width="1.15"/>
<text transform="translate(681,420.7) rotate(-90)" text-anchor="middle" dominant-baseline="central" font-size="14" letter-spacing="-1.2">18</text>
<rect x="747.5" y="416.2" width="15.299999999999955" height="46.30000000000001" fill="none" stroke="#111" stroke-width="1.1" rx="0"/>
<line x1="747.5" y1="431.7" x2="762.8" y2="431.7" stroke="#7a7a7a" stroke-width="0.9"/>
<line x1="747.5" y1="447.3" x2="762.8" y2="447.3" stroke="#7a7a7a" stroke-width="0.9"/>
<text transform="translate(758.5,424) rotate(-90)" text-anchor="middle" font-size="7.6" letter-spacing="-0.5">R/W</text>
<text transform="translate(758.5,439.5) rotate(-90)" text-anchor="middle" font-size="7.6" letter-spacing="-0.5">G/B</text>
<text transform="translate(758.5,455) rotate(-90)" text-anchor="middle" font-size="7.6" letter-spacing="-0.5">L</text>
<rect x="765.4" y="416.2" width="12.100000000000023" height="46.30000000000001" fill="none" stroke="#111" stroke-width="1.1" rx="0"/>
<line x1="765.4" y1="431.7" x2="777.5" y2="431.7" stroke="#7a7a7a" stroke-width="0.9"/>
<line x1="765.4" y1="447.3" x2="777.5" y2="447.3" stroke="#7a7a7a" stroke-width="0.9"/>
<circle cx="771.4" cy="424" r="1.9" fill="#fff" stroke="#111" stroke-width="0.9"/>
<circle cx="771.4" cy="439.5" r="1.9" fill="#fff" stroke="#111" stroke-width="0.9"/>
<circle cx="771.4" cy="455" r="1.9" fill="#fff" stroke="#111" stroke-width="0.9"/>
<rect x="777.5" y="416.2" width="5.5" height="46.3" fill="#000"/>
<rect x="700.2" y="465.6" width="95.5" height="3.6" fill="#000"/>
<rect x="700.2" y="471.6" width="95.5" height="11.899999999999977" fill="none" stroke="#111" stroke-width="1.1" rx="0"/>
<rect x="700.2" y="487.1" width="95.5" height="14.299999999999955" fill="none" stroke="#111" stroke-width="1.1" rx="0"/>
<circle cx="706.1700000000001" cy="477.5" r="2.0" fill="#fff" stroke="#111" stroke-width="0.9"/>
<text transform="translate(709.47,494.2) rotate(-90)" text-anchor="middle" font-size="9">B</text>
<line x1="712.1400000000001" y1="471.6" x2="712.1400000000001" y2="483.5" stroke="#111" stroke-width="1.0"/>
<line x1="712.1400000000001" y1="487.1" x2="712.1400000000001" y2="501.4" stroke="#111" stroke-width="1.0"/>
<circle cx="718.1100000000001" cy="477.5" r="2.0" fill="#fff" stroke="#111" stroke-width="0.9"/>
<text transform="translate(721.4100000000001,494.2) rotate(-90)" text-anchor="middle" font-size="9">W</text>
<line x1="724.08" y1="471.6" x2="724.08" y2="483.5" stroke="#111" stroke-width="1.0"/>
<line x1="724.08" y1="487.1" x2="724.08" y2="501.4" stroke="#111" stroke-width="1.0"/>
<circle cx="730.0500000000001" cy="477.5" r="2.0" fill="#fff" stroke="#111" stroke-width="0.9"/>
<text transform="translate(733.35,494.2) rotate(-90)" text-anchor="middle" font-size="9">W</text>
<line x1="736.0200000000001" y1="471.6" x2="736.0200000000001" y2="483.5" stroke="#111" stroke-width="1.0"/>
<line x1="736.0200000000001" y1="487.1" x2="736.0200000000001" y2="501.4" stroke="#111" stroke-width="1.0"/>
<circle cx="741.9900000000001" cy="477.5" r="2.0" fill="#fff" stroke="#111" stroke-width="0.9"/>
<text transform="translate(745.2900000000001,494.2) rotate(-90)" text-anchor="middle" font-size="9">G</text>
<line x1="747.96" y1="471.6" x2="747.96" y2="483.5" stroke="#111" stroke-width="1.0"/>
<line x1="747.96" y1="487.1" x2="747.96" y2="501.4" stroke="#111" stroke-width="1.0"/>
<circle cx="753.9300000000001" cy="477.5" r="2.0" fill="#fff" stroke="#111" stroke-width="0.9"/>
<text transform="translate(757.23,494.2) rotate(-90)" text-anchor="middle" font-size="9">B</text>
<line x1="759.9000000000001" y1="471.6" x2="759.9000000000001" y2="483.5" stroke="#111" stroke-width="1.0"/>
<line x1="759.9000000000001" y1="487.1" x2="759.9000000000001" y2="501.4" stroke="#111" stroke-width="1.0"/>
<circle cx="765.8700000000001" cy="477.5" r="2.0" fill="#fff" stroke="#111" stroke-width="0.9"/>
<text transform="translate(769.1700000000001,494.2) rotate(-90)" text-anchor="middle" font-size="9">Y</text>
<line x1="771.84" y1="471.6" x2="771.84" y2="483.5" stroke="#111" stroke-width="1.0"/>
<line x1="771.84" y1="487.1" x2="771.84" y2="501.4" stroke="#111" stroke-width="1.0"/>
<circle cx="777.8100000000001" cy="477.5" r="2.0" fill="#fff" stroke="#111" stroke-width="0.9"/>
<text transform="translate(781.11,494.2) rotate(-90)" text-anchor="middle" font-size="9">R</text>
<line x1="783.7800000000001" y1="471.6" x2="783.7800000000001" y2="483.5" stroke="#111" stroke-width="1.0"/>
<line x1="783.7800000000001" y1="487.1" x2="783.7800000000001" y2="501.4" stroke="#111" stroke-width="1.0"/>
<circle cx="789.7500000000001" cy="477.5" r="2.0" fill="#fff" stroke="#111" stroke-width="0.9"/>
<text transform="translate(793.0500000000001,494.2) rotate(-90)" text-anchor="middle" font-size="9">G</text>
<rect x="745" y="502" width="5.5" height="6.5" fill="none" stroke="#111" stroke-width="0.9" rx="0"/>
<polyline points="706.7,501.4 706.7,773 766.5,773 766.5,836" fill="none" stroke="#7a7a7a" stroke-width="1.2" />
<polyline points="718.1,501.4 718.1,703.3 780.7,703.3 780.7,836" fill="none" stroke="#111" stroke-width="1.2" />
<polyline points="743.2,501.4 743.2,747.5 723.3,747.5 723.3,836" fill="none" stroke="#7a7a7a" stroke-width="1.2" />
<polyline points="766.3,501.4 766.3,734.5 711.5,734.5 711.5,836" fill="none" stroke="#111" stroke-width="1.2" />
<polyline points="777.3,501.4 777.3,671.8" fill="none" stroke="#111" stroke-width="1.2" />
<polyline points="790.2,501.4 790.2,760.5 736.3,760.5 736.3,836" fill="none" stroke="#7a7a7a" stroke-width="1.2" />
<rect x="701.62" y="528.216" width="10.16" height="8.568" fill="#fff"/>
<text transform="translate(706.7,532.5) rotate(-90)" text-anchor="middle" dominant-baseline="central" font-size="9.6" fill="#000" font-weight="normal">B</text>
<rect x="713.02" y="528.216" width="10.16" height="8.568" fill="#fff"/>
<text transform="translate(718.1,532.5) rotate(-90)" text-anchor="middle" dominant-baseline="central" font-size="9.6" fill="#000" font-weight="normal">W</text>
<rect x="725.7199999999999" y="528.216" width="10.16" height="8.568" fill="#fff"/>
<text transform="translate(730.8,532.5) rotate(-90)" text-anchor="middle" dominant-baseline="central" font-size="9.6" fill="#000" font-weight="normal">W</text>
<rect x="738.12" y="528.216" width="10.16" height="8.568" fill="#fff"/>
<text transform="translate(743.2,532.5) rotate(-90)" text-anchor="middle" dominant-baseline="central" font-size="9.6" fill="#000" font-weight="normal">G</text>
<rect x="749.62" y="528.216" width="10.16" height="8.568" fill="#fff"/>
<text transform="translate(754.7,532.5) rotate(-90)" text-anchor="middle" dominant-baseline="central" font-size="9.6" fill="#000" font-weight="normal">B</text>
<rect x="761.2199999999999" y="528.216" width="10.16" height="8.568" fill="#fff"/>
<text transform="translate(766.3,532.5) rotate(-90)" text-anchor="middle" dominant-baseline="central" font-size="9.6" fill="#000" font-weight="normal">Y</text>
<rect x="772.2199999999999" y="528.216" width="10.16" height="8.568" fill="#fff"/>
<text transform="translate(777.3,532.5) rotate(-90)" text-anchor="middle" dominant-baseline="central" font-size="9.6" fill="#000" font-weight="normal">R</text>
<rect x="785.12" y="528.216" width="10.16" height="8.568" fill="#fff"/>
<text transform="translate(790.2,532.5) rotate(-90)" text-anchor="middle" dominant-baseline="central" font-size="9.6" fill="#000" font-weight="normal">G</text>
<rect x="754.4" y="50" width="54.200000000000045" height="96.6" fill="none" stroke="#111" stroke-width="1.2" rx="0"/>
<line x1="768.6" y1="50" x2="768.6" y2="146.6" stroke="#111" stroke-width="1.1"/>
<line x1="781.4" y1="50" x2="781.4" y2="146.6" stroke="#111" stroke-width="1.1"/>
<line x1="795.5" y1="50" x2="795.5" y2="146.6" stroke="#111" stroke-width="1.1"/>
<line x1="754.4" y1="58.1" x2="808.6" y2="58.1" stroke="#111" stroke-width="1.1"/>
<line x1="754.4" y1="71" x2="808.6" y2="71" stroke="#111" stroke-width="1.1"/>
<line x1="754.4" y1="90.1" x2="808.6" y2="90.1" stroke="#111" stroke-width="1.1"/>
<line x1="754.4" y1="104.5" x2="808.6" y2="104.5" stroke="#111" stroke-width="1.1"/>
<text transform="translate(765.5,64.5) rotate(-90)" text-anchor="middle" font-size="9" letter-spacing="-0.3">R</text>
<text transform="translate(765.5,80.5) rotate(-90)" text-anchor="middle" font-size="9" letter-spacing="-0.3">B/W</text>
<text transform="translate(765.5,97.3) rotate(-90)" text-anchor="middle" font-size="9" letter-spacing="-0.3">B</text>
<text transform="translate(779,144) rotate(-90)" font-size="9">STOP</text>
<text transform="translate(792.5,144) rotate(-90)" font-size="9">ON</text>
<text transform="translate(806,144) rotate(-90)" font-size="9">START</text>
<line x1="774.6" y1="81.1" x2="774.6" y2="97.1" stroke="#111" stroke-width="1.0"/>
<circle cx="774.6" cy="81.1" r="4.1" fill="#fff" stroke="#111" stroke-width="1.0"/>
<circle cx="774.6" cy="97.1" r="4.1" fill="#fff" stroke="#111" stroke-width="1.0"/>
<line x1="802.3" y1="50" x2="802.3" y2="60" stroke="#111" stroke-width="1.0"/>
<circle cx="802.3" cy="64.6" r="4.1" fill="#fff" stroke="#111" stroke-width="1.0"/>
<circle cx="738.4" cy="75" r="8.7" fill="#fff" stroke="#111" stroke-width="1.15"/>
<text transform="translate(738.4,75) rotate(-90)" text-anchor="middle" dominant-baseline="central" font-size="14" letter-spacing="-1.2">12</text>
<polyline points="808.6,64.6 839.2,64.6 851.5,58" fill="none" stroke="#7a7a7a" stroke-width="1.2" />
<polyline points="808.6,81.5 839.2,81.5 850.1,63.7" fill="none" stroke="#111" stroke-width="1.2" />
<polyline points="808.6,96.4 839.2,96.4 848.7,70" fill="none" stroke="#111" stroke-width="1.2" />
<rect x="813.62" y="60.315999999999995" width="10.16" height="8.568" fill="#fff"/>
<text transform="translate(818.7,64.6) rotate(-90)" text-anchor="middle" dominant-baseline="central" font-size="9.6" fill="#000" font-weight="normal">R</text>
<rect x="824.92" y="71.648" width="10.16" height="19.703999999999997" fill="#fff"/>
<text transform="translate(830,81.5) rotate(-90)" text-anchor="middle" dominant-baseline="central" font-size="9.6" fill="#000" font-weight="normal">B/W</text>
<rect x="813.62" y="92.116" width="10.16" height="8.568" fill="#fff"/>
<text transform="translate(818.7,96.4) rotate(-90)" text-anchor="middle" dominant-baseline="central" font-size="9.6" fill="#000" font-weight="normal">B</text>
<rect x="849.4" y="50" width="45.0" height="27.200000000000003" fill="none" stroke="#111" stroke-width="1.1" rx="0"/>
<rect x="852.6" y="50" width="40.0" height="24.099999999999994" fill="none" stroke="#111" stroke-width="1.0" rx="0"/>
<line x1="866.8" y1="50" x2="866.8" y2="74.1" stroke="#111" stroke-width="1.0"/>
<line x1="879.4" y1="50" x2="879.4" y2="74.1" stroke="#111" stroke-width="1.0"/>
<text transform="translate(863.5,62) rotate(-90)" text-anchor="middle" font-size="9" letter-spacing="-0.3">B/W</text>
<text transform="translate(876.5,62) rotate(-90)" text-anchor="middle" font-size="9" letter-spacing="-0.3">R/W</text>
<text transform="translate(889,62) rotate(-90)" text-anchor="middle" font-size="9" letter-spacing="-0.3">Y</text>
<path d="M852.6,78 H892.6 V114.5 H852.6 V111.7 H855.7 V85 H852.6 Z" fill="#fff" stroke="#000" stroke-width="1.1"/>
<line x1="855.7" y1="96.4" x2="892.6" y2="96.4" stroke="#111" stroke-width="1.0"/>
<line x1="866.8" y1="78" x2="866.8" y2="114.5" stroke="#111" stroke-width="1.0"/>
<line x1="879.4" y1="78" x2="879.4" y2="114.5" stroke="#111" stroke-width="1.0"/>
<text transform="translate(863.5,87) rotate(-90)" text-anchor="middle" font-size="9" letter-spacing="-0.3">B/W</text>
<text transform="translate(876.5,87) rotate(-90)" text-anchor="middle" font-size="9" letter-spacing="-0.3">R/W</text>
<text transform="translate(889,87) rotate(-90)" text-anchor="middle" font-size="9" letter-spacing="-0.3">Y</text>
<text transform="translate(863.5,105.5) rotate(-90)" text-anchor="middle" font-size="9" letter-spacing="-0.3">B</text>
<text transform="translate(876.5,105.5) rotate(-90)" text-anchor="middle" font-size="9" letter-spacing="-0.3">R</text>
<text transform="translate(889,105.5) rotate(-90)" text-anchor="middle" font-size="9" letter-spacing="-0.3">L/R</text>
<polyline points="892.6,82.5 911.4,66.5 1032.2,66.5 1032.2,302.6 1117,302.6 1117,836" fill="none" stroke="#7a7a7a" stroke-width="1.2" />
<polyline points="892.6,88.8 911.4,78.5 1018.6,78.5 1018.6,393 980.7,393 980.7,741" fill="none" stroke="#7a7a7a" stroke-width="1.2" />
<polyline points="892.6,93.4 911.4,91.3 980.7,91.3 980.7,378 1048.5,378 1048.5,836" fill="none" stroke="#7a7a7a" stroke-width="1.2" />
<polyline points="892.6,97.8 911.4,100.9 940.1,100.9 940.1,331.9 898.6,331.9" fill="none" stroke="#7a7a7a" stroke-width="1.2" />
<polyline points="892.6,103.4 911.4,112.6 967,112.6 967,544.2 919.3,544.2" fill="none" stroke="#7a7a7a" stroke-width="1.2" />
<polyline points="892.6,109 911.4,125.7 953.5,125.7 953.5,408.2" fill="none" stroke="#111" stroke-width="1.2" />
<rect x="924.42" y="56.648" width="10.16" height="19.703999999999997" fill="#fff"/>
<text transform="translate(929.5,66.5) rotate(-90)" text-anchor="middle" dominant-baseline="central" font-size="9.6" fill="#000" font-weight="normal">L/R</text>
<rect x="914.7199999999999" y="74.216" width="10.16" height="8.568" fill="#fff"/>
<text transform="translate(919.8,78.5) rotate(-90)" text-anchor="middle" dominant-baseline="central" font-size="9.6" fill="#000" font-weight="normal">Y</text>
<rect x="924.42" y="81.448" width="10.16" height="19.703999999999997" fill="#fff"/>
<text transform="translate(929.5,91.3) rotate(-90)" text-anchor="middle" dominant-baseline="central" font-size="9.6" fill="#000" font-weight="normal">R/W</text>
<rect x="914.7199999999999" y="96.616" width="10.16" height="8.568" fill="#fff"/>
<text transform="translate(919.8,100.9) rotate(-90)" text-anchor="middle" dominant-baseline="central" font-size="9.6" fill="#000" font-weight="normal">R</text>
<rect x="924.42" y="102.74799999999999" width="10.16" height="19.703999999999997" fill="#fff"/>
<text transform="translate(929.5,112.6) rotate(-90)" text-anchor="middle" dominant-baseline="central" font-size="9.6" fill="#000" font-weight="normal">B/W</text>
<rect x="914.7199999999999" y="121.416" width="10.16" height="8.568" fill="#fff"/>
<text transform="translate(919.8,125.7) rotate(-90)" text-anchor="middle" dominant-baseline="central" font-size="9.6" fill="#000" font-weight="normal">B</text>
<path d="M858.5,151.5 H881.6 V207.5 H858.5 Z" fill="#fff" stroke="#000" stroke-width="1.1"/>
<line x1="869.7" y1="151.5" x2="869.7" y2="207.5" stroke="#111" stroke-width="1.0"/>
<line x1="858.5" y1="170.6" x2="881.6" y2="170.6" stroke="#111" stroke-width="1.0"/>
<line x1="858.5" y1="188.5" x2="881.6" y2="188.5" stroke="#111" stroke-width="1.0"/>
<rect x="854.5" y="174" width="4.0" height="9" fill="none" stroke="#111" stroke-width="1.0" rx="0"/>
<text transform="translate(867,161) rotate(-90)" text-anchor="middle" font-size="9" letter-spacing="-0.3">R</text>
<text transform="translate(879,161) rotate(-90)" text-anchor="middle" font-size="9" letter-spacing="-0.3">Br</text>
<text transform="translate(867,179.5) rotate(-90)" text-anchor="middle" font-size="9" letter-spacing="-0.3">R/B</text>
<text transform="translate(879,179.5) rotate(-90)" text-anchor="middle" font-size="9" letter-spacing="-0.3">R/W</text>
<text transform="translate(867,198) rotate(-90)" text-anchor="middle" font-size="9" letter-spacing="-0.3">B</text>
<text transform="translate(879,198) rotate(-90)" text-anchor="middle" font-size="9" letter-spacing="-0.3">B/W</text>
<circle cx="838" cy="179" r="8.7" fill="#fff" stroke="#111" stroke-width="1.15"/>
<text transform="translate(838,179) rotate(-90)" text-anchor="middle" dominant-baseline="central" font-size="14" letter-spacing="-1.2">13</text>
<polyline points="881.6,176 903,172.5 940.1,172.5" fill="none" stroke="#7a7a7a" stroke-width="1.2" />
<circle cx="940.1" cy="172.5" r="2.6" fill="#000"/>
<polyline points="881.6,182 903,186 980.7,186" fill="none" stroke="#7a7a7a" stroke-width="1.2" />
<circle cx="980.7" cy="186" r="2.6" fill="#000"/>
<polyline points="881.6,192 903,199.9 967,199.9" fill="none" stroke="#7a7a7a" stroke-width="1.2" />
<circle cx="967" cy="199.9" r="2.6" fill="#000"/>
<polyline points="881.6,200 903,213.5 953.5,213.5" fill="none" stroke="#111" stroke-width="1.2" />
<circle cx="953.5" cy="213.5" r="2.6" fill="#000"/>
<rect x="922.62" y="140.51600000000002" width="10.16" height="8.568" fill="#fff"/>
<text transform="translate(927.7,144.8) rotate(-90)" text-anchor="middle" dominant-baseline="central" font-size="9.6" fill="#000" font-weight="normal">R</text>
<rect x="908.3199999999999" y="151.53199999999998" width="10.16" height="14.136" fill="#fff"/>
<text transform="translate(913.4,158.6) rotate(-90)" text-anchor="middle" dominant-baseline="central" font-size="9.6" fill="#000" font-weight="normal">Br</text>
<rect x="922.62" y="162.648" width="10.16" height="19.703999999999997" fill="#fff"/>
<text transform="translate(927.7,172.5) rotate(-90)" text-anchor="middle" dominant-baseline="central" font-size="9.6" fill="#000" font-weight="normal">R/B</text>
<rect x="908.3199999999999" y="176.148" width="10.16" height="19.703999999999997" fill="#fff"/>
<text transform="translate(913.4,186) rotate(-90)" text-anchor="middle" dominant-baseline="central" font-size="9.6" fill="#000" font-weight="normal">R/W</text>
<rect x="922.62" y="190.048" width="10.16" height="19.703999999999997" fill="#fff"/>
<text transform="translate(927.7,199.9) rotate(-90)" text-anchor="middle" dominant-baseline="central" font-size="9.6" fill="#000" font-weight="normal">B/W</text>
<rect x="908.3199999999999" y="209.216" width="10.16" height="8.568" fill="#fff"/>
<text transform="translate(913.4,213.5) rotate(-90)" text-anchor="middle" dominant-baseline="central" font-size="9.6" fill="#000" font-weight="normal">B</text>
<rect x="804.4" y="321.1" width="35.0" height="52.099999999999966" fill="none" stroke="#111" stroke-width="1.2" rx="0"/>
<polyline points="829.8,256.2 829.8,325.2" fill="none" stroke="#111" stroke-width="1.2" />
<rect x="824.7199999999999" y="294.216" width="10.16" height="8.568" fill="#fff"/>
<text transform="translate(829.8,298.5) rotate(-90)" text-anchor="middle" dominant-baseline="central" font-size="9.6" fill="#000" font-weight="normal">B</text>
<circle cx="829.8" cy="330.7" r="5.4" fill="#fff" stroke="#111" stroke-width="1.0"/>
<circle cx="829.8" cy="330.7" r="2.8" fill="#fff" stroke="#111" stroke-width="1.0"/>
<circle cx="791" cy="346" r="8.7" fill="#fff" stroke="#111" stroke-width="1.15"/>
<text transform="translate(791,346) rotate(-90)" text-anchor="middle" dominant-baseline="central" font-size="14" letter-spacing="-1.2">16</text>
<path d="M840,328.1 H856.4 V336.3 H870.1 V358 H856.4 V367.2 H840 Z" fill="#fff" stroke="#000" stroke-width="1.1"/>
<path d="M841.8,330 H854.6 V338.1 H868.3 V356.2 H854.6 V365.4 H841.8 Z" fill="none" stroke="#000" stroke-width="0.9"/>
<line x1="840.6" y1="328.1" x2="840.6" y2="367.2" stroke="#111" stroke-width="2.0"/>
<line x1="840" y1="347.5" x2="854.6" y2="347.5" stroke="#111" stroke-width="1.0"/>
<line x1="854.6" y1="338" x2="854.6" y2="356.2" stroke="#111" stroke-width="1.0"/>
<line x1="870.1" y1="338.6" x2="884.3" y2="338.6" stroke="#111" stroke-width="1.0"/>
<line x1="870.1" y1="356.5" x2="884.3" y2="356.5" stroke="#111" stroke-width="1.0"/>
<text transform="translate(881,347.5) rotate(-90)" text-anchor="middle" font-size="9.5">W</text>
<rect x="884.3" y="329.3" width="14.200000000000045" height="36.099999999999966" fill="none" stroke="#111" stroke-width="1.1" rx="0"/>
<line x1="884.2" y1="347.4" x2="898.6" y2="347.4" stroke="#111" stroke-width="1.0"/>
<text transform="translate(895,338.5) rotate(-90)" text-anchor="middle" font-size="9" letter-spacing="-0.3">G/R</text>
<text transform="translate(895,356.5) rotate(-90)" text-anchor="middle" font-size="9">R</text>
<rect x="906.92" y="327.616" width="10.16" height="8.568" fill="#fff"/>
<text transform="translate(912,331.9) rotate(-90)" text-anchor="middle" dominant-baseline="central" font-size="9.6" fill="#000" font-weight="normal">R</text>
<polyline points="898.6,347.9 1088.8,347.9 1088.8,836" fill="none" stroke="#7a7a7a" stroke-width="1.2" />
<circle cx="1047.8" cy="347.9" r="2.6" fill="#000"/>
<circle cx="1075.2" cy="347.9" r="2.6" fill="#000"/>
<polyline points="1075.2,347.9 1075.2,836" fill="none" stroke="#7a7a7a" stroke-width="1.2" />
<rect x="922.45" y="337.7" width="10.5" height="20.4" fill="#fff"/>
<text transform="translate(927.7,347.9) rotate(-90)" text-anchor="middle" dominant-baseline="central" font-size="10" fill="#000" font-weight="normal">G/R</text>
<polyline points="898.6,362.9 1061.6,362.9 1061.6,836" fill="none" stroke="#7a7a7a" stroke-width="1.2" />
<rect x="908.3199999999999" y="358.616" width="10.16" height="8.568" fill="#fff"/>
<text transform="translate(913.4,362.9) rotate(-90)" text-anchor="middle" dominant-baseline="central" font-size="9.6" fill="#000" font-weight="normal">W</text>
<rect x="859.4" y="265.4" width="14.0" height="35.10000000000002" fill="none" stroke="#111" stroke-width="1.1" rx="0"/>
<circle cx="865.7" cy="276" r="2.3" fill="#fff" stroke="#111" stroke-width="0.9"/>
<circle cx="865.7" cy="290" r="2.3" fill="#fff" stroke="#111" stroke-width="0.9"/>
<path d="M865.7,278.3 Q861,283 865.7,283 Q870.5,283 865.7,287.7" fill="none" stroke="#000" stroke-width="0.9"/>
<path d="M867.5,272 H873.4 M867.5,293.5 H873.4" stroke="#777" stroke-width="0.9"/>
<rect x="873.4" y="266.5" width="13.0" height="10.5" fill="none" stroke="#111" stroke-width="1.1" rx="0"/>
<circle cx="883.6" cy="271.7" r="1.2" fill="#fff" stroke="#111" stroke-width="0.9"/>
<path d="M886.4,266.5 H906.6 V277.0 H886.4 M886.4,269.5 H894 V274.0 H886.4 M894,271.7 H906.6" fill="none" stroke="#000" stroke-width="1.0"/>
<rect x="873.4" y="289" width="13.0" height="10.5" fill="none" stroke="#111" stroke-width="1.1" rx="0"/>
<circle cx="883.6" cy="294.2" r="1.2" fill="#fff" stroke="#111" stroke-width="0.9"/>
<path d="M886.4,289 H906.6 V299.5 H886.4 M886.4,292 H894 V296.5 H886.4 M894,294.2 H906.6" fill="none" stroke="#000" stroke-width="1.0"/>
<circle cx="846.5" cy="281.8" r="8.7" fill="#fff" stroke="#111" stroke-width="1.15"/>
<text transform="translate(846.5,281.8) rotate(-90)" text-anchor="middle" dominant-baseline="central" font-size="14" letter-spacing="-1.2">15</text>
<polyline points="906.6,271.5 1143.3,271.5" fill="none" stroke="#7a7a7a" stroke-width="1.2" />
<polyline points="1143.3,271.5 1143.3,836" fill="none" stroke="#111" stroke-width="1.2" />
<polyline points="906.6,294.4 940.1,294.4" fill="none" stroke="#7a7a7a" stroke-width="1.2" />
<circle cx="940.1" cy="294.4" r="2.6" fill="#000"/>
<rect x="912.92" y="267.216" width="10.16" height="8.568" fill="#fff"/>
<text transform="translate(918,271.5) rotate(-90)" text-anchor="middle" dominant-baseline="central" font-size="9.6" fill="#000" font-weight="normal">R</text>
<rect x="912.92" y="290.116" width="10.16" height="8.568" fill="#fff"/>
<text transform="translate(918,294.4) rotate(-90)" text-anchor="middle" dominant-baseline="central" font-size="9.6" fill="#000" font-weight="normal">R</text>
<rect x="844.6" y="397.9" width="40.799999999999955" height="64.40000000000003" fill="none" stroke="#111" stroke-width="1.2" rx="0"/>
<circle cx="830" cy="428.5" r="8.7" fill="#fff" stroke="#111" stroke-width="1.15"/>
<text transform="translate(830,428.5) rotate(-90)" text-anchor="middle" dominant-baseline="central" font-size="14" letter-spacing="-1.2">21</text>
<rect x="885.4" y="402.7" width="14.100000000000023" height="54.30000000000001" fill="none" stroke="#111" stroke-width="1.1" rx="0"/>
<line x1="888" y1="405" x2="888" y2="455" stroke="#111" stroke-width="0.9"/>
<line x1="885.4" y1="415" x2="899.5" y2="415" stroke="#111" stroke-width="0.9"/>
<line x1="885.4" y1="434.4" x2="899.5" y2="434.4" stroke="#111" stroke-width="0.9"/>
<line x1="885.4" y1="446.8" x2="899.5" y2="446.8" stroke="#111" stroke-width="0.9"/>
<circle cx="894" cy="408.8" r="1.9" fill="#fff" stroke="#111" stroke-width="0.9"/>
<circle cx="894" cy="424.7" r="1.9" fill="#fff" stroke="#111" stroke-width="0.9"/>
<circle cx="894" cy="440.6" r="1.9" fill="#fff" stroke="#111" stroke-width="0.9"/>
<circle cx="894" cy="452" r="1.9" fill="#fff" stroke="#111" stroke-width="0.9"/>
<rect x="902.6" y="403" width="10.799999999999955" height="54" fill="none" stroke="#111" stroke-width="1.1" rx="0"/>
<line x1="902.6" y1="415" x2="913.4" y2="415" stroke="#111" stroke-width="0.9"/>
<line x1="902.6" y1="434.4" x2="913.4" y2="434.4" stroke="#111" stroke-width="0.9"/>
<line x1="902.6" y1="446.8" x2="913.4" y2="446.8" stroke="#111" stroke-width="0.9"/>
<text transform="translate(911.5,409) rotate(-90)" text-anchor="middle" font-size="9" letter-spacing="-0.4">B</text>
<text transform="translate(911.5,424.7) rotate(-90)" text-anchor="middle" font-size="9" letter-spacing="-0.4">B/W</text>
<text transform="translate(911.5,440.6) rotate(-90)" text-anchor="middle" font-size="9" letter-spacing="-0.4">Y</text>
<text transform="translate(911.5,452) rotate(-90)" text-anchor="middle" font-size="9" letter-spacing="-0.4">L</text>
<rect x="913.4" y="432" width="5.600000000000023" height="6.5" fill="none" stroke="#111" stroke-width="0.9" rx="0"/>
<polyline points="913.4,408.5 1102.7,408.5 1102.7,836" fill="none" stroke="#7a7a7a" stroke-width="1.2" />
<circle cx="953.5" cy="408.5" r="2.6" fill="#000"/>
<polyline points="913.4,423.8 1034.6,423.8 1034.6,836" fill="none" stroke="#7a7a7a" stroke-width="1.2" />
<circle cx="967" cy="423.8" r="2.6" fill="#000"/>
<polyline points="913.4,440.4 953.5,440.4 953.5,514.8 919.3,514.8" fill="none" stroke="#111" stroke-width="1.2" />
<polyline points="913.4,451.5 1021.5,451.5 1021.5,836" fill="none" stroke="#7a7a7a" stroke-width="1.2" />
<polyline points="887,514.8 859.7,514.8 859.7,521" fill="none" stroke="#111" stroke-width="1.2" />
<polyline points="887,544.2 859.7,544.2 859.7,537.4" fill="none" stroke="#111" stroke-width="1.2" />
<circle cx="859.7" cy="529.2" r="8.2" fill="#fff" stroke="#111" stroke-width="1.2"/>
<path d="M855,525 h9 l-4.5,6 z M855,531.5 h9 M859.7,521 v16" fill="none" stroke="#000" stroke-width="0.9"/>
<circle cx="838.2" cy="528" r="8.7" fill="#fff" stroke="#111" stroke-width="1.15"/>
<text transform="translate(838.2,528) rotate(-90)" text-anchor="middle" dominant-baseline="central" font-size="14" letter-spacing="-1.2">22</text>
<path d="M887,510.5 V519 L903,514.8 Z" fill="#fff" stroke="#000" stroke-width="1.1"/>
<rect x="903" y="510.5" width="16.299999999999955" height="8.100000000000023" fill="none" stroke="#111" stroke-width="1.1" rx="0"/>
<rect x="887" y="540" width="16.5" height="8.299999999999955" fill="none" stroke="#111" stroke-width="1.1" rx="0"/>
<path d="M919.3,540 V548.4 L903.5,544.2 Z" fill="#fff" stroke="#000" stroke-width="1.1"/>
<rect x="869.92" y="510.51599999999996" width="10.16" height="8.568" fill="#fff"/>
<text transform="translate(875,514.8) rotate(-90)" text-anchor="middle" dominant-baseline="central" font-size="9.6" fill="#000" font-weight="normal">Y</text>
<rect x="926.92" y="510.51599999999996" width="10.16" height="8.568" fill="#fff"/>
<text transform="translate(932,514.8) rotate(-90)" text-anchor="middle" dominant-baseline="central" font-size="9.6" fill="#000" font-weight="normal">Y</text>
<rect x="869.92" y="534.3480000000001" width="10.16" height="19.703999999999997" fill="#fff"/>
<text transform="translate(875,544.2) rotate(-90)" text-anchor="middle" dominant-baseline="central" font-size="9.6" fill="#000" font-weight="normal">B/W</text>
<rect x="926.92" y="534.3480000000001" width="10.16" height="19.703999999999997" fill="#fff"/>
<text transform="translate(932,544.2) rotate(-90)" text-anchor="middle" dominant-baseline="central" font-size="9.6" fill="#000" font-weight="normal">B/W</text>
<rect x="1049.4" y="50" width="37.0" height="14.400000000000006" fill="none" stroke="#111" stroke-width="1.1" rx="0"/>
<path d="M1053.7,64.4 V100 Q1053.7,106 1057,109 M1063.3,64.4 V60 M1063.3,64.4 V103 Q1063.3,106 1065,109 M1072.8,64.4 V104 Q1072.8,107 1071,109 M1082.4,64.4 V103 Q1082.4,107 1079,109" fill="none" stroke="#777" stroke-width="1.1"/>
<rect x="1048.6625000000001" y="74.235" width="10.075" height="19.529999999999998" fill="#fff"/>
<text transform="translate(1053.7,84) rotate(-90)" text-anchor="middle" dominant-baseline="central" font-size="9.5" fill="#000" font-weight="normal">G/R</text>
<rect x="1058.2625" y="74.235" width="10.075" height="19.529999999999998" fill="#fff"/>
<text transform="translate(1063.3,84) rotate(-90)" text-anchor="middle" dominant-baseline="central" font-size="9.5" fill="#000" font-weight="normal">L/W</text>
<rect x="1067.7625" y="79.745" width="10.075" height="8.51" fill="#fff"/>
<text transform="translate(1072.8,84) rotate(-90)" text-anchor="middle" dominant-baseline="central" font-size="9.5" fill="#000" font-weight="normal">B</text>
<rect x="1077.3625000000002" y="79.745" width="10.075" height="8.51" fill="#fff"/>
<text transform="translate(1082.4,84) rotate(-90)" text-anchor="middle" dominant-baseline="central" font-size="9.5" fill="#000" font-weight="normal">Y</text>
<path d="M1050.1,109 H1083.6 V153.4 H1050.1 V146 H1054 V116 H1050.1 Z" fill="#fff" stroke="#000" stroke-width="1.1"/>
<rect x="1066" y="104" width="5" height="5" fill="none" stroke="#111" stroke-width="1.0" rx="0"/>
<line x1="1056.6" y1="109" x2="1056.6" y2="153.4" stroke="#111" stroke-width="1.0"/>
<line x1="1068" y1="109" x2="1068" y2="153.4" stroke="#111" stroke-width="1.0"/>
<line x1="1056.6" y1="131.2" x2="1083.6" y2="131.2" stroke="#111" stroke-width="1.0"/>
<rect x="1053" y="153.4" width="27.5" height="38.0" fill="none" stroke="#111" stroke-width="1.1" rx="0"/>
<line x1="1056.6" y1="153.4" x2="1056.6" y2="191.4" stroke="#111" stroke-width="1.0"/>
<line x1="1068" y1="153.4" x2="1068" y2="191.4" stroke="#111" stroke-width="1.0"/>
<line x1="1053" y1="172.3" x2="1080.5" y2="172.3" stroke="#111" stroke-width="1.0"/>
<text transform="translate(1066,120) rotate(-90)" text-anchor="middle" font-size="9" letter-spacing="-0.4">B</text>
<text transform="translate(1080,120) rotate(-90)" text-anchor="middle" font-size="9" letter-spacing="-0.4">L/W</text>
<text transform="translate(1066,142) rotate(-90)" text-anchor="middle" font-size="9" letter-spacing="-0.4">G/R</text>
<text transform="translate(1080,142) rotate(-90)" text-anchor="middle" font-size="9" letter-spacing="-0.4">Y</text>
<text transform="translate(1066,162.8) rotate(-90)" text-anchor="middle" font-size="9" letter-spacing="-0.4">G/R</text>
<text transform="translate(1078.5,162.8) rotate(-90)" text-anchor="middle" font-size="9" letter-spacing="-0.4">Y</text>
<text transform="translate(1066,181.8) rotate(-90)" text-anchor="middle" font-size="9" letter-spacing="-0.4">B</text>
<text transform="translate(1078.5,181.8) rotate(-90)" text-anchor="middle" font-size="9" letter-spacing="-0.4">L/W</text>
<rect x="1063" y="191.4" width="9" height="4.599999999999994" fill="none" stroke="#111" stroke-width="1.0" rx="0"/>
<polyline points="1059,193 1047.8,218.4 1047.8,347.9" fill="none" stroke="#7a7a7a" stroke-width="1.2" />
<polyline points="1064,194 1061.6,218.4 1061.6,287 1130.6,287 1130.6,836" fill="none" stroke="#111" stroke-width="1.2" />
<polyline points="1072,194 1075.2,218.4" fill="none" stroke="#7a7a7a" stroke-width="1.2" />
<polyline points="1077,191.4 1088.8,218.4 1088.8,332.4 1018.6,332.4" fill="none" stroke="#111" stroke-width="1.2" />
<circle cx="1018.6" cy="332.4" r="2.6" fill="#000"/>
<rect x="1042.7625" y="221.735" width="10.075" height="19.529999999999998" fill="#fff"/>
<text transform="translate(1047.8,231.5) rotate(-90)" text-anchor="middle" dominant-baseline="central" font-size="9.5" fill="#000" font-weight="normal">G/R</text>
<rect x="1056.5625" y="221.735" width="10.075" height="19.529999999999998" fill="#fff"/>
<text transform="translate(1061.6,231.5) rotate(-90)" text-anchor="middle" dominant-baseline="central" font-size="9.5" fill="#000" font-weight="normal">L/W</text>
<rect x="1070.1625000000001" y="227.245" width="10.075" height="8.51" fill="#fff"/>
<text transform="translate(1075.2,231.5) rotate(-90)" text-anchor="middle" dominant-baseline="central" font-size="9.5" fill="#000" font-weight="normal">B</text>
<rect x="1083.7625" y="227.245" width="10.075" height="8.51" fill="#fff"/>
<text transform="translate(1088.8,231.5) rotate(-90)" text-anchor="middle" dominant-baseline="central" font-size="9.5" fill="#000" font-weight="normal">Y</text>
<polyline points="895.6,741 895.6,716.3 953.6,716.3 953.6,741" fill="none" stroke="#7a7a7a" stroke-width="1.2" />
<rect x="890.52" y="724.716" width="10.16" height="8.568" fill="#fff"/>
<text transform="translate(895.6,729) rotate(-90)" text-anchor="middle" dominant-baseline="central" font-size="9.6" fill="#000" font-weight="normal">Y</text>
<rect x="948.52" y="724.716" width="10.16" height="8.568" fill="#fff"/>
<text transform="translate(953.6,729) rotate(-90)" text-anchor="middle" dominant-baseline="central" font-size="9.6" fill="#000" font-weight="normal">Y</text>
<rect x="975.62" y="724.716" width="10.16" height="8.568" fill="#fff"/>
<text transform="translate(980.7,729) rotate(-90)" text-anchor="middle" dominant-baseline="central" font-size="9.6" fill="#000" font-weight="normal">Y</text>
<rect x="861.0999999999999" y="741.1" width="10.400000000000091" height="19.799999999999955" fill="none" stroke="#111" stroke-width="1.1" rx="0"/>
<path d="M861.0999999999999,760.9 v-5 h2.5 v5 M871.5,760.9 v-5 h-2.5 v5 M866.3,760.9 v-5" fill="none" stroke="#000" stroke-width="0.8"/>
<rect x="862.0" y="761" width="8.599999999999909" height="13.299999999999955" fill="none" stroke="#111" stroke-width="1.1" rx="0"/>
<circle cx="866.3" cy="765.5" r="1.2" fill="#fff" stroke="#111" stroke-width="0.8"/>
<rect x="890.6999999999999" y="741.1" width="10.400000000000091" height="19.799999999999955" fill="none" stroke="#111" stroke-width="1.1" rx="0"/>
<path d="M890.6999999999999,760.9 v-5 h2.5 v5 M901.1,760.9 v-5 h-2.5 v5 M895.9,760.9 v-5" fill="none" stroke="#000" stroke-width="0.8"/>
<rect x="891.6" y="761" width="8.599999999999909" height="13.299999999999955" fill="none" stroke="#111" stroke-width="1.1" rx="0"/>
<circle cx="895.9" cy="765.5" r="1.2" fill="#fff" stroke="#111" stroke-width="0.8"/>
<rect x="948.5999999999999" y="741.1" width="10.400000000000091" height="19.799999999999955" fill="none" stroke="#111" stroke-width="1.1" rx="0"/>
<path d="M948.5999999999999,760.9 v-5 h2.5 v5 M959.0,760.9 v-5 h-2.5 v5 M953.8,760.9 v-5" fill="none" stroke="#000" stroke-width="0.8"/>
<rect x="949.5" y="761" width="8.599999999999909" height="13.299999999999955" fill="none" stroke="#111" stroke-width="1.1" rx="0"/>
<circle cx="953.8" cy="765.5" r="1.2" fill="#fff" stroke="#111" stroke-width="0.8"/>
<rect x="976.0" y="741.1" width="10.400000000000091" height="19.799999999999955" fill="none" stroke="#111" stroke-width="1.1" rx="0"/>
<path d="M976.0,760.9 v-5 h2.5 v5 M986.4000000000001,760.9 v-5 h-2.5 v5 M981.2,760.9 v-5" fill="none" stroke="#000" stroke-width="0.8"/>
<rect x="976.9000000000001" y="761" width="8.599999999999909" height="13.299999999999955" fill="none" stroke="#111" stroke-width="1.1" rx="0"/>
<circle cx="981.2" cy="765.5" r="1.2" fill="#fff" stroke="#111" stroke-width="0.8"/>
<rect x="859.5" y="774.3" width="43.10000000000002" height="21.700000000000045" fill="none" stroke="#111" stroke-width="1.1" rx="0"/>
<path d="M863.5,780 v12 M863.5,786 H897 M866.3,774.3 v8 a5,5 0 0 0 10,0 a4,5 0 0 1 0,8 a4,5 0 0 1 8,-8 a4,5 0 0 1 0,8 a4,5 0 0 1 8,-8 v-8" fill="none" stroke="#000" stroke-width="0.9"/>
<rect x="946.1" y="774.3" width="41.5" height="21.700000000000045" fill="none" stroke="#111" stroke-width="1.1" rx="0"/>
<path d="M953.8,774.3 v5 h3 M981.2,774.3 v5 h-3" fill="none" stroke="#000" stroke-width="0.9"/>
<circle cx="959.5" cy="782" r="3.3" fill="#fff" stroke="#111" stroke-width="0.9"/>
<circle cx="975.5" cy="782" r="3.3" fill="#fff" stroke="#111" stroke-width="0.9"/>
<line x1="962" y1="785" x2="975" y2="791.5" stroke="#111" stroke-width="0.9"/>
<circle cx="881.8" cy="818.2" r="8.7" fill="#fff" stroke="#111" stroke-width="1.15"/>
<text transform="translate(881.8,818.2) rotate(-90)" text-anchor="middle" dominant-baseline="central" font-size="14" letter-spacing="-1.2">23</text>
<circle cx="967.8" cy="818.2" r="8.7" fill="#fff" stroke="#111" stroke-width="1.15"/>
<text transform="translate(967.8,818.2) rotate(-90)" text-anchor="middle" dominant-baseline="central" font-size="14" letter-spacing="-1.2">24</text>
<rect x="1016.4625" y="818.745" width="10.075" height="8.51" fill="#fff"/>
<text transform="translate(1021.5,823) rotate(-90)" text-anchor="middle" dominant-baseline="central" font-size="9.5" fill="#000" font-weight="normal">L</text>
<rect x="1029.5625" y="813.235" width="10.075" height="19.529999999999998" fill="#fff"/>
<text transform="translate(1034.6,823) rotate(-90)" text-anchor="middle" dominant-baseline="central" font-size="9.5" fill="#000" font-weight="normal">B/W</text>
<rect x="1043.4625" y="813.235" width="10.075" height="19.529999999999998" fill="#fff"/>
<text transform="translate(1048.5,823) rotate(-90)" text-anchor="middle" dominant-baseline="central" font-size="9.5" fill="#000" font-weight="normal">R/W</text>
<rect x="1056.5625" y="818.745" width="10.075" height="8.51" fill="#fff"/>
<text transform="translate(1061.6,823) rotate(-90)" text-anchor="middle" dominant-baseline="central" font-size="9.5" fill="#000" font-weight="normal">W</text>
<rect x="1070.1625000000001" y="813.235" width="10.075" height="19.529999999999998" fill="#fff"/>
<text transform="translate(1075.2,823) rotate(-90)" text-anchor="middle" dominant-baseline="central" font-size="9.5" fill="#000" font-weight="normal">G/R</text>
<rect x="1083.7625" y="813.235" width="10.075" height="19.529999999999998" fill="#fff"/>
<text transform="translate(1088.8,823) rotate(-90)" text-anchor="middle" dominant-baseline="central" font-size="9.5" fill="#000" font-weight="normal">G/R</text>
<rect x="1097.6625000000001" y="818.745" width="10.075" height="8.51" fill="#fff"/>
<text transform="translate(1102.7,823) rotate(-90)" text-anchor="middle" dominant-baseline="central" font-size="9.5" fill="#000" font-weight="normal">B</text>
<rect x="1111.9625" y="813.235" width="10.075" height="19.529999999999998" fill="#fff"/>
<text transform="translate(1117,823) rotate(-90)" text-anchor="middle" dominant-baseline="central" font-size="9.5" fill="#000" font-weight="normal">L/R</text>
<rect x="1125.5625" y="813.235" width="10.075" height="19.529999999999998" fill="#fff"/>
<text transform="translate(1130.6,823) rotate(-90)" text-anchor="middle" dominant-baseline="central" font-size="9.5" fill="#000" font-weight="normal">L/W</text>
<rect x="1138.2625" y="818.745" width="10.075" height="8.51" fill="#fff"/>
<text transform="translate(1143.3,823) rotate(-90)" text-anchor="middle" dominant-baseline="central" font-size="9.5" fill="#000" font-weight="normal">R</text>
<circle cx="1170.3" cy="177.8" r="6.4" fill="#fff" stroke="#111" stroke-width="1.0"/>
<text transform="translate(1170.3,177.8) rotate(-90)" text-anchor="middle" dominant-baseline="central" font-size="8.6" letter-spacing="-0.4">25</text>
<text transform="translate(1175.2,168.2) rotate(-90)" font-size="13.3">Carburetor solenoid</text>
<circle cx="1185.8" cy="177.8" r="6.4" fill="#fff" stroke="#111" stroke-width="1.0"/>
<text transform="translate(1185.8,177.8) rotate(-90)" text-anchor="middle" dominant-baseline="central" font-size="8.6" letter-spacing="-0.4">26</text>
<text transform="translate(1190.7,168.2) rotate(-90)" font-size="13.3">Carburetor heater</text>
<circle cx="1201.3" cy="177.8" r="6.4" fill="#fff" stroke="#111" stroke-width="1.0"/>
<text transform="translate(1201.3,177.8) rotate(-90)" text-anchor="middle" dominant-baseline="central" font-size="8.6" letter-spacing="-0.4">27</text>
<text transform="translate(1206.2,168.2) rotate(-90)" font-size="13.3">Battery</text>
<circle cx="1215.7" cy="177.8" r="6.4" fill="#fff" stroke="#111" stroke-width="1.0"/>
<text transform="translate(1215.7,177.8) rotate(-90)" text-anchor="middle" dominant-baseline="central" font-size="8.6" letter-spacing="-0.4">28</text>
<text transform="translate(1220.6000000000001,168.2) rotate(-90)" font-size="13.3">Starter motor</text>
<circle cx="1231.2" cy="177.8" r="6.4" fill="#fff" stroke="#111" stroke-width="1.0"/>
<text transform="translate(1231.2,177.8) rotate(-90)" text-anchor="middle" dominant-baseline="central" font-size="8.6" letter-spacing="-0.4">29</text>
<text transform="translate(1236.1000000000001,168.2) rotate(-90)" font-size="13.3">Magnetic switch</text>
<circle cx="1246.7" cy="177.8" r="6.4" fill="#fff" stroke="#111" stroke-width="1.0"/>
<text transform="translate(1246.7,177.8) rotate(-90)" text-anchor="middle" dominant-baseline="central" font-size="8.6" letter-spacing="-0.4">30</text>
<text transform="translate(1251.6000000000001,168.2) rotate(-90)" font-size="13.3">Charging coil</text>
<circle cx="1261.5" cy="177.8" r="6.4" fill="#fff" stroke="#111" stroke-width="1.0"/>
<text transform="translate(1261.5,177.8) rotate(-90)" text-anchor="middle" dominant-baseline="central" font-size="8.6" letter-spacing="-0.4">31</text>
<text transform="translate(1266.4,168.2) rotate(-90)" font-size="13.3">TCI unit</text>
<circle cx="1277.7" cy="177.8" r="6.4" fill="#fff" stroke="#111" stroke-width="1.0"/>
<text transform="translate(1277.7,177.8) rotate(-90)" text-anchor="middle" dominant-baseline="central" font-size="8.6" letter-spacing="-0.4">32</text>
<text transform="translate(1282.6000000000001,168.2) rotate(-90)" font-size="13.3">Spark plug</text>
<circle cx="1292.8" cy="177.8" r="6.4" fill="#fff" stroke="#111" stroke-width="1.0"/>
<text transform="translate(1292.8,177.8) rotate(-90)" text-anchor="middle" dominant-baseline="central" font-size="8.6" letter-spacing="-0.4">33</text>
<text transform="translate(1297.7,168.2) rotate(-90)" font-size="13.3">Oil level switch</text>
<circle cx="1170.3" cy="393.3" r="6.4" fill="#fff" stroke="#111" stroke-width="1.0"/>
<text transform="translate(1170.3,393.3) rotate(-90)" text-anchor="middle" dominant-baseline="central" font-size="8.6" letter-spacing="-0.4">16</text>
<text transform="translate(1175.2,382.6) rotate(-90)" font-size="13.3">Rectifier/regulator</text>
<circle cx="1185.8" cy="393.3" r="6.4" fill="#fff" stroke="#111" stroke-width="1.0"/>
<text transform="translate(1185.8,393.3) rotate(-90)" text-anchor="middle" dominant-baseline="central" font-size="8.6" letter-spacing="-0.4">17</text>
<text transform="translate(1190.7,382.6) rotate(-90)" font-size="13.3">Voltage adjuster</text>
<circle cx="1201.3" cy="393.3" r="6.4" fill="#fff" stroke="#111" stroke-width="1.0"/>
<text transform="translate(1201.3,393.3) rotate(-90)" text-anchor="middle" dominant-baseline="central" font-size="8.6" letter-spacing="-0.4">18</text>
<text transform="translate(1206.2,382.6) rotate(-90)" font-size="13.3">AVR</text>
<circle cx="1215.7" cy="393.3" r="6.4" fill="#fff" stroke="#111" stroke-width="1.0"/>
<text transform="translate(1215.7,393.3) rotate(-90)" text-anchor="middle" dominant-baseline="central" font-size="8.6" letter-spacing="-0.4">19</text>
<text transform="translate(1220.6000000000001,382.6) rotate(-90)" font-size="13.3">Condenser</text>
<circle cx="1231.2" cy="393.3" r="6.4" fill="#fff" stroke="#111" stroke-width="1.0"/>
<text transform="translate(1231.2,393.3) rotate(-90)" text-anchor="middle" dominant-baseline="central" font-size="8.6" letter-spacing="-0.4">20</text>
<text transform="translate(1236.1000000000001,382.6) rotate(-90)" font-size="13.3">Economy idle unit</text>
<circle cx="1246.7" cy="393.3" r="6.4" fill="#fff" stroke="#111" stroke-width="1.0"/>
<text transform="translate(1246.7,393.3) rotate(-90)" text-anchor="middle" dominant-baseline="central" font-size="8.6" letter-spacing="-0.4">21</text>
<text transform="translate(1251.6000000000001,382.6) rotate(-90)" font-size="13.3">Oil warning unit</text>
<circle cx="1261.5" cy="393.3" r="6.4" fill="#fff" stroke="#111" stroke-width="1.0"/>
<text transform="translate(1261.5,393.3) rotate(-90)" text-anchor="middle" dominant-baseline="central" font-size="8.6" letter-spacing="-0.4">22</text>
<text transform="translate(1266.4,382.6) rotate(-90)" font-size="13.3">Oil warning light</text>
<circle cx="1277.7" cy="393.3" r="6.4" fill="#fff" stroke="#111" stroke-width="1.0"/>
<text transform="translate(1277.7,393.3) rotate(-90)" text-anchor="middle" dominant-baseline="central" font-size="8.6" letter-spacing="-0.4">23</text>
<text transform="translate(1282.6000000000001,382.6) rotate(-90)" font-size="13.3">Solenoid valve</text>
<circle cx="1292.8" cy="393.3" r="6.4" fill="#fff" stroke="#111" stroke-width="1.0"/>
<text transform="translate(1292.8,393.3) rotate(-90)" text-anchor="middle" dominant-baseline="central" font-size="8.6" letter-spacing="-0.4">24</text>
<text transform="translate(1297.7,382.6) rotate(-90)" font-size="13.3">Economy switch</text>
<circle cx="1170.3" cy="606" r="6.4" fill="#fff" stroke="#111" stroke-width="1.0"/>
<text transform="translate(1170.3,606) rotate(-90)" text-anchor="middle" dominant-baseline="central" font-size="9.5" letter-spacing="-0.4">9</text>
<text transform="translate(1175.2,596.4) rotate(-90)" font-size="13.3">AC receptacle</text>
<text transform="translate(1190.7,596.4) rotate(-90)" font-size="13.3">(125 V-30 A)</text>
<circle cx="1201.3" cy="606" r="6.4" fill="#fff" stroke="#111" stroke-width="1.0"/>
<text transform="translate(1201.3,606) rotate(-90)" text-anchor="middle" dominant-baseline="central" font-size="8.6" letter-spacing="-0.4">10</text>
<text transform="translate(1206.2,596.4) rotate(-90)" font-size="13.3">AC receptacle</text>
<text transform="translate(1220.6000000000001,596.4) rotate(-90)" font-size="13.3">(125/250 V-30 A)</text>
<circle cx="1231.2" cy="606" r="6.4" fill="#fff" stroke="#111" stroke-width="1.0"/>
<text transform="translate(1231.2,606) rotate(-90)" text-anchor="middle" dominant-baseline="central" font-size="8.6" letter-spacing="-0.4">11</text>
<text transform="translate(1236.1000000000001,596.4) rotate(-90)" font-size="13.3">Ground terminal</text>
<circle cx="1246.7" cy="606" r="6.4" fill="#fff" stroke="#111" stroke-width="1.0"/>
<text transform="translate(1246.7,606) rotate(-90)" text-anchor="middle" dominant-baseline="central" font-size="8.6" letter-spacing="-0.4">12</text>
<text transform="translate(1251.6000000000001,596.4) rotate(-90)" font-size="13.3">Main switch</text>
<circle cx="1261.5" cy="606" r="6.4" fill="#fff" stroke="#111" stroke-width="1.0"/>
<text transform="translate(1261.5,606) rotate(-90)" text-anchor="middle" dominant-baseline="central" font-size="8.6" letter-spacing="-0.4">13</text>
<text transform="translate(1266.4,596.4) rotate(-90)" font-size="13.3">Remote control terminal</text>
<circle cx="1277.7" cy="606" r="6.4" fill="#fff" stroke="#111" stroke-width="1.0"/>
<text transform="translate(1277.7,606) rotate(-90)" text-anchor="middle" dominant-baseline="central" font-size="8.6" letter-spacing="-0.4">14</text>
<text transform="translate(1282.6000000000001,596.4) rotate(-90)" font-size="13.3">Rectifier</text>
<circle cx="1292.8" cy="606" r="6.4" fill="#fff" stroke="#111" stroke-width="1.0"/>
<text transform="translate(1292.8,606) rotate(-90)" text-anchor="middle" dominant-baseline="central" font-size="8.6" letter-spacing="-0.4">15</text>
<text transform="translate(1297.7,596.4) rotate(-90)" font-size="13.3">Fuse (10 A)</text>
<circle cx="1170" cy="819" r="6.4" fill="#fff" stroke="#111" stroke-width="1.0"/>
<text transform="translate(1170,819) rotate(-90)" text-anchor="middle" dominant-baseline="central" font-size="9.5" letter-spacing="-0.4">1</text>
<text transform="translate(1174.9,809.7) rotate(-90)" font-size="13.3">Rotor assembly</text>
<circle cx="1186.4" cy="819" r="6.4" fill="#fff" stroke="#111" stroke-width="1.0"/>
<text transform="translate(1186.4,819) rotate(-90)" text-anchor="middle" dominant-baseline="central" font-size="9.5" letter-spacing="-0.4">2</text>
<text transform="translate(1191.3000000000002,809.7) rotate(-90)" font-size="13.3">Generator assembly</text>
<circle cx="1201.5" cy="819" r="6.4" fill="#fff" stroke="#111" stroke-width="1.0"/>
<text transform="translate(1201.5,819) rotate(-90)" text-anchor="middle" dominant-baseline="central" font-size="9.5" letter-spacing="-0.4">3</text>
<text transform="translate(1206.4,809.7) rotate(-90)" font-size="13.3">Main coil</text>
<circle cx="1216.7" cy="819" r="6.4" fill="#fff" stroke="#111" stroke-width="1.0"/>
<text transform="translate(1216.7,819) rotate(-90)" text-anchor="middle" dominant-baseline="central" font-size="9.5" letter-spacing="-0.4">4</text>
<text transform="translate(1221.6000000000001,809.7) rotate(-90)" font-size="13.3">Sub coil</text>
<circle cx="1231.9" cy="819" r="6.4" fill="#fff" stroke="#111" stroke-width="1.0"/>
<text transform="translate(1231.9,819) rotate(-90)" text-anchor="middle" dominant-baseline="central" font-size="9.5" letter-spacing="-0.4">5</text>
<text transform="translate(1236.8000000000002,809.7) rotate(-90)" font-size="13.3">Exciter field coil</text>
<circle cx="1247" cy="819" r="6.4" fill="#fff" stroke="#111" stroke-width="1.0"/>
<text transform="translate(1247,819) rotate(-90)" text-anchor="middle" dominant-baseline="central" font-size="9.5" letter-spacing="-0.4">6</text>
<text transform="translate(1251.9,809.7) rotate(-90)" font-size="13.3">Voltage meter</text>
<circle cx="1262.2" cy="819" r="6.4" fill="#fff" stroke="#111" stroke-width="1.0"/>
<text transform="translate(1262.2,819) rotate(-90)" text-anchor="middle" dominant-baseline="central" font-size="9.5" letter-spacing="-0.4">7</text>
<text transform="translate(1267.1000000000001,809.7) rotate(-90)" font-size="13.3">AC switch (NFB)</text>
<circle cx="1278.6" cy="819" r="6.4" fill="#fff" stroke="#111" stroke-width="1.0"/>
<text transform="translate(1278.6,819) rotate(-90)" text-anchor="middle" dominant-baseline="central" font-size="9.5" letter-spacing="-0.4">8</text>
<text transform="translate(1283.5,809.7) rotate(-90)" font-size="13.3">AC receptacle</text>
<text transform="translate(1298.6000000000001,809.7) rotate(-90)" font-size="13.3">(125 V-20 A)</text></svg>
<div class="a" style="left:243px;top:56px;width:1173px;height:5px;background:linear-gradient(rgba(0,0,0,0.10),rgba(0,0,0,0))"></div>
<div id="rdiv" class="a"></div>
<div id="vscroll" class="a"></div>

<svg class="a" style="left:1420px;top:56px" width="15" height="780">
<path d="M3.5,12 l4,-4 l4,4 z" fill="#222"/>
<rect x="1.5" y="272.5" width="13" height="15" rx="2" fill="#eee" stroke="#8d8d8d" stroke-width="1"/>
<rect x="7" y="274" width="6" height="12" fill="#d6d6d6"/>
<path d="M3.5,770 h8 l-4,4.5 z" fill="#222"/>
</svg>

<div id="tree" class="a">
<svg width="0" height="0" style="position:absolute"><defs><linearGradient id="bg" x1="0" x2="0" y1="0" y2="1"><stop offset="0" stop-color="#d4e7f5"/><stop offset="1" stop-color="#93b8d6"/></linearGradient></defs></svg>
<div class="a" style="left:-45px;top:-128px;width:229px;height:833px">
<div class="a" style="left:73px;top:193px;width:1px;height:643px;background:#a0a0a0"></div>
<div class="a" style="left:89px;top:300px;width:1px;height:144px;background:#a0a0a0"></div>
<div class="a" style="left:89px;top:486px;width:1px;height:176px;background:#a0a0a0"></div>
<div class="a" style="left:89px;top:690px;width:1px;height:146px;background:#a0a0a0"></div>
<svg class="a" style="left:66px;top:131px" width="14" height="17" viewBox="0 0 14 17"><path d="M1.5,2 a1.5,1.5 0 0 1 1.5,-1.5 h7 v15.5 l-4.2,-3.5 l-4.3,3.5 z" fill="url(#bg)" stroke="#3f5061" stroke-width="1"/><path d="M9.5,0.5 h2 a1.2,1.2 0 0 1 1.2,1.2 v5.8 h-3.2 z" fill="#7aa5c6" stroke="#3f5061" stroke-width="0.9"/></svg>
<div class="tx" style="left:86px;top:133.6px;">Return to Main</div>
<div class="tx" style="left:86px;top:153.6px;">Index Page</div>
<div class="a" style="left:52px;top:181px;width:9px;height:9px;border:1px solid #8c8c8c;background:#fff"><div class="a" style="left:1px;top:3px;width:5px;height:1px;background:#222"></div></div>
<svg class="a" style="left:66px;top:177px" width="14" height="17" viewBox="0 0 14 17"><path d="M1.5,2 a1.5,1.5 0 0 1 1.5,-1.5 h7 v15.5 l-4.2,-3.5 l-4.3,3.5 z" fill="url(#bg)" stroke="#3f5061" stroke-width="1"/><path d="M9.5,0.5 h2 a1.2,1.2 0 0 1 1.2,1.2 v5.8 h-3.2 z" fill="#7aa5c6" stroke="#3f5061" stroke-width="0.9"/></svg>
<div class="tx" style="left:86px;top:179.6px; letter-spacing:-0.7px">EF5200DE/EF6600</div>
<div class="tx" style="left:86px;top:199.6px; letter-spacing:-0.7px">DE/YG5200D/YG6</div>
<div class="tx" style="left:86px;top:219.6px; letter-spacing:-0.7px">600D/YG6600DE</div>
<div class="tx" style="left:86px;top:239.6px;">Supplementary</div>
<div class="tx" style="left:86px;top:259.6px;">Service Manual</div>
<div class="a" style="left:73px;top:292px;width:10px;height:1px;background:#a0a0a0"></div>
<div class="a" style="left:68px;top:287px;width:9px;height:9px;border:1px solid #8c8c8c;background:#fff"><div class="a" style="left:1px;top:3px;width:5px;height:1px;background:#222"></div></div>
<svg class="a" style="left:82px;top:283px" width="14" height="17" viewBox="0 0 14 17"><path d="M1.5,2 a1.5,1.5 0 0 1 1.5,-1.5 h7 v15.5 l-4.2,-3.5 l-4.3,3.5 z" fill="url(#bg)" stroke="#3f5061" stroke-width="1"/><path d="M9.5,0.5 h2 a1.2,1.2 0 0 1 1.2,1.2 v5.8 h-3.2 z" fill="#7aa5c6" stroke="#3f5061" stroke-width="0.9"/></svg>
<div class="tx" style="left:102px;top:286.0px;">How To Use</div>
<div class="tx" style="left:102px;top:306.0px;">This Manual</div>
<div class="a" style="left:89px;top:338px;width:10px;height:1px;background:#a0a0a0"></div>
<svg class="a" style="left:98px;top:329px" width="14" height="17" viewBox="0 0 14 17"><path d="M1.5,2 a1.5,1.5 0 0 1 1.5,-1.5 h7 v15.5 l-4.2,-3.5 l-4.3,3.5 z" fill="url(#bg)" stroke="#3f5061" stroke-width="1"/><path d="M9.5,0.5 h2 a1.2,1.2 0 0 1 1.2,1.2 v5.8 h-3.2 z" fill="#7aa5c6" stroke="#3f5061" stroke-width="0.9"/></svg>
<div class="tx" style="left:118px;top:332.0px;">Particularly</div>
<div class="tx" style="left:118px;top:352.0px;">Important</div>
<div class="tx" style="left:118px;top:372.0px;">Information</div>
<div class="a" style="left:89px;top:404px;width:10px;height:1px;background:#a0a0a0"></div>
<svg class="a" style="left:98px;top:395px" width="14" height="17" viewBox="0 0 14 17"><path d="M1.5,2 a1.5,1.5 0 0 1 1.5,-1.5 h7 v15.5 l-4.2,-3.5 l-4.3,3.5 z" fill="url(#bg)" stroke="#3f5061" stroke-width="1"/><path d="M9.5,0.5 h2 a1.2,1.2 0 0 1 1.2,1.2 v5.8 h-3.2 z" fill="#7aa5c6" stroke="#3f5061" stroke-width="0.9"/></svg>
<div class="tx" style="left:118px;top:397.7px;">Illustrated</div>
<div class="tx" style="left:118px;top:417.7px;">Symbols</div>
<div class="a" style="left:73px;top:450px;width:10px;height:1px;background:#a0a0a0"></div>
<svg class="a" style="left:82px;top:441px" width="14" height="17" viewBox="0 0 14 17"><path d="M1.5,2 a1.5,1.5 0 0 1 1.5,-1.5 h7 v15.5 l-4.2,-3.5 l-4.3,3.5 z" fill="url(#bg)" stroke="#3f5061" stroke-width="1"/><path d="M9.5,0.5 h2 a1.2,1.2 0 0 1 1.2,1.2 v5.8 h-3.2 z" fill="#7aa5c6" stroke="#3f5061" stroke-width="0.9"/></svg>
<div class="tx" style="left:102px;top:443.6px;">Contents</div>
<div class="a" style="left:73px;top:476px;width:10px;height:1px;background:#a0a0a0"></div>
<div class="a" style="left:68px;top:471px;width:9px;height:9px;border:1px solid #8c8c8c;background:#fff"><div class="a" style="left:1px;top:3px;width:5px;height:1px;background:#222"></div></div>
<svg class="a" style="left:82px;top:467px" width="14" height="17" viewBox="0 0 14 17"><path d="M1.5,2 a1.5,1.5 0 0 1 1.5,-1.5 h7 v15.5 l-4.2,-3.5 l-4.3,3.5 z" fill="url(#bg)" stroke="#3f5061" stroke-width="1"/><path d="M9.5,0.5 h2 a1.2,1.2 0 0 1 1.2,1.2 v5.8 h-3.2 z" fill="#7aa5c6" stroke="#3f5061" stroke-width="0.9"/></svg>
<div class="tx" style="left:102px;top:470.0px;">General</div>
<div class="tx" style="left:102px;top:490.0px;">Information</div>
<div class="a" style="left:89px;top:522px;width:10px;height:1px;background:#a0a0a0"></div>
<svg class="a" style="left:98px;top:513px" width="14" height="17" viewBox="0 0 14 17"><path d="M1.5,2 a1.5,1.5 0 0 1 1.5,-1.5 h7 v15.5 l-4.2,-3.5 l-4.3,3.5 z" fill="url(#bg)" stroke="#3f5061" stroke-width="1"/><path d="M9.5,0.5 h2 a1.2,1.2 0 0 1 1.2,1.2 v5.8 h-3.2 z" fill="#7aa5c6" stroke="#3f5061" stroke-width="0.9"/></svg>
<div class="tx" style="left:118px;top:515.9px;">Machine</div>
<div class="tx" style="left:118px;top:535.9px;">Identification</div>
<div class="a" style="left:89px;top:568px;width:10px;height:1px;background:#a0a0a0"></div>
<svg class="a" style="left:98px;top:559px" width="14" height="17" viewBox="0 0 14 17"><path d="M1.5,2 a1.5,1.5 0 0 1 1.5,-1.5 h7 v15.5 l-4.2,-3.5 l-4.3,3.5 z" fill="url(#bg)" stroke="#3f5061" stroke-width="1"/><path d="M9.5,0.5 h2 a1.2,1.2 0 0 1 1.2,1.2 v5.8 h-3.2 z" fill="#7aa5c6" stroke="#3f5061" stroke-width="0.9"/></svg>
<div class="tx" style="left:118px;top:561.9px;">Serial</div>
<div class="tx" style="left:118px;top:581.9px;">Number</div>
<div class="a" style="left:89px;top:614px;width:10px;height:1px;background:#a0a0a0"></div>
<svg class="a" style="left:98px;top:605px" width="14" height="17" viewBox="0 0 14 17"><path d="M1.5,2 a1.5,1.5 0 0 1 1.5,-1.5 h7 v15.5 l-4.2,-3.5 l-4.3,3.5 z" fill="url(#bg)" stroke="#3f5061" stroke-width="1"/><path d="M9.5,0.5 h2 a1.2,1.2 0 0 1 1.2,1.2 v5.8 h-3.2 z" fill="#7aa5c6" stroke="#3f5061" stroke-width="0.9"/></svg>
<div class="tx" style="left:118px;top:607.9px;">Starting</div>
<div class="tx" style="left:118px;top:627.9px;">Serial</div>
<div class="tx" style="left:118px;top:647.9px;">Number</div>
<div class="a" style="left:73px;top:680px;width:10px;height:1px;background:#a0a0a0"></div>
<div class="a" style="left:68px;top:675px;width:9px;height:9px;border:1px solid #8c8c8c;background:#fff"><div class="a" style="left:1px;top:3px;width:5px;height:1px;background:#222"></div></div>
<svg class="a" style="left:82px;top:671px" width="14" height="17" viewBox="0 0 14 17"><path d="M1.5,2 a1.5,1.5 0 0 1 1.5,-1.5 h7 v15.5 l-4.2,-3.5 l-4.3,3.5 z" fill="url(#bg)" stroke="#3f5061" stroke-width="1"/><path d="M9.5,0.5 h2 a1.2,1.2 0 0 1 1.2,1.2 v5.8 h-3.2 z" fill="#7aa5c6" stroke="#3f5061" stroke-width="0.9"/></svg>
<div class="tx" style="left:102px;top:673.7px;">Periodic</div>
<div class="tx" style="left:102px;top:693.7px;">Inspections And</div>
<div class="tx" style="left:102px;top:713.7px;">Adjustments</div>
<div class="a" style="left:89px;top:746px;width:10px;height:1px;background:#a0a0a0"></div>
<svg class="a" style="left:98px;top:737px" width="14" height="17" viewBox="0 0 14 17"><path d="M1.5,2 a1.5,1.5 0 0 1 1.5,-1.5 h7 v15.5 l-4.2,-3.5 l-4.3,3.5 z" fill="url(#bg)" stroke="#3f5061" stroke-width="1"/><path d="M9.5,0.5 h2 a1.2,1.2 0 0 1 1.2,1.2 v5.8 h-3.2 z" fill="#7aa5c6" stroke="#3f5061" stroke-width="0.9"/></svg>
<div class="tx" style="left:118px;top:739.6px;">Introduction</div>
<div class="a" style="left:89px;top:772px;width:10px;height:1px;background:#a0a0a0"></div>
<svg class="a" style="left:98px;top:763px" width="14" height="17" viewBox="0 0 14 17"><path d="M1.5,2 a1.5,1.5 0 0 1 1.5,-1.5 h7 v15.5 l-4.2,-3.5 l-4.3,3.5 z" fill="url(#bg)" stroke="#3f5061" stroke-width="1"/><path d="M9.5,0.5 h2 a1.2,1.2 0 0 1 1.2,1.2 v5.8 h-3.2 z" fill="#7aa5c6" stroke="#3f5061" stroke-width="0.9"/></svg>
<div class="tx" style="left:118px;top:765.7px;">Maintenance</div>
<div class="tx" style="left:118px;top:785.7px;">Intervals</div>
<div class="tx" style="left:118px;top:805.7px;">Chart</div>
<div class="a" style="left:89px;top:838px;width:10px;height:1px;background:#a0a0a0"></div>
<svg class="a" style="left:98px;top:829px" width="14" height="17" viewBox="0 0 14 17"><path d="M1.5,2 a1.5,1.5 0 0 1 1.5,-1.5 h7 v15.5 l-4.2,-3.5 l-4.3,3.5 z" fill="url(#bg)" stroke="#3f5061" stroke-width="1"/><path d="M9.5,0.5 h2 a1.2,1.2 0 0 1 1.2,1.2 v5.8 h-3.2 z" fill="#7aa5c6" stroke="#3f5061" stroke-width="0.9"/></svg>
</div>
</div>

<div class="a" style="left:212px;top:128px;width:16px;height:704px;background:#ececec;border-left:1px solid #e2e2e2"></div>
<svg class="a" style="left:212px;top:128px" width="16" height="16"><path d="M4,10 l4,-4 l4,4 z" fill="#333"/></svg>
<div class="a" style="left:214px;top:146px;width:13px;height:122px;background:linear-gradient(90deg,#f6f6f6,#e8e8e8 50%,#d8d8d8);border:1px solid #9a9a9a;border-radius:2px"></div>
<svg class="a" style="left:214px;top:200px" width="13" height="10"><path d="M3,2.5 h7 M3,4.5 h7 M3,6.5 h7" stroke="#777" stroke-width="1"/></svg>
<svg class="a" style="left:212px;top:816px" width="16" height="16"><path d="M4,5 l4,4 l4,-4 z" fill="#333"/></svg>

<div id="bottom" class="a"></div>
</body></html>
